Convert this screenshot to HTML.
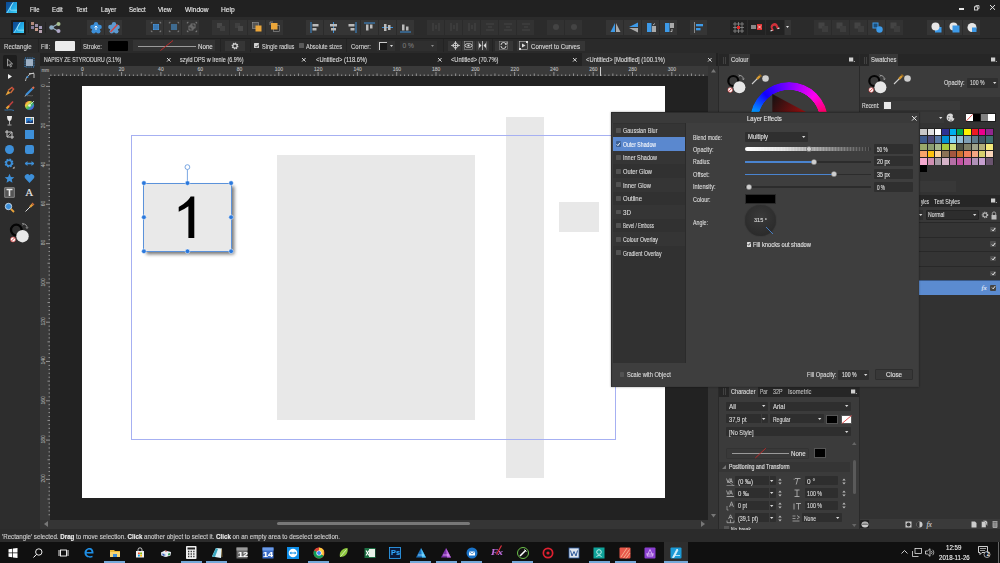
<!DOCTYPE html><html><head><meta charset="utf-8"><title>Affinity Designer</title><style>
*{margin:0;padding:0;box-sizing:border-box}
html,body{width:1000px;height:563px;overflow:hidden;background:#222;font-family:"Liberation Sans",sans-serif}
.a{position:absolute}
.t{position:absolute;white-space:nowrap;line-height:1;-webkit-text-stroke:0.12px currentColor}
svg{position:absolute;overflow:visible}
</style></head><body>
<div class="a" style="left:0px;top:0px;width:1000px;height:17px;background:#212121;"></div>
<svg style="left:6px;top:2.1px;" width="11" height="11" viewBox="0 0 11 11"><defs><linearGradient id="lg6" x1="0" y1="0" x2="1" y2="1"><stop offset="0" stop-color="#0b4f9c"/><stop offset="0.45" stop-color="#1d9fe0"/><stop offset="1" stop-color="#3fd0f6"/></linearGradient></defs><rect width="11" height="11" fill="url(#lg6)"/><path d="M0 0H6.8L0 11Z" fill="#0d4a92" opacity="0.75"/><path d="M1 11L7.2 0.6" stroke="#b8ecfc" stroke-width="0.6"/><path d="M7.2 0.6C5 3.5 3.6 6.3 4.6 8.2H11" stroke="#b8ecfc" stroke-width="0.6" fill="none"/></svg>
<div id="t1" class="t" style="left:29.5px;top:5.80px;font-size:7.6px;color:#ececec;transform:scaleX(0.7755);transform-origin:0 50%;">File</div>
<div id="t2" class="t" style="left:52.3px;top:5.80px;font-size:7.6px;color:#ececec;transform:scaleX(0.8172);transform-origin:0 50%;">Edit</div>
<div id="t3" class="t" style="left:76.3px;top:5.80px;font-size:7.6px;color:#ececec;transform:scaleX(0.8108);transform-origin:0 50%;">Text</div>
<div id="t4" class="t" style="left:100.8px;top:5.80px;font-size:7.6px;color:#ececec;transform:scaleX(0.8000);transform-origin:0 50%;">Layer</div>
<div id="t5" class="t" style="left:128.9px;top:5.80px;font-size:7.6px;color:#ececec;transform:scaleX(0.7959);transform-origin:0 50%;">Select</div>
<div id="t6" class="t" style="left:158.4px;top:5.80px;font-size:7.6px;color:#ececec;transform:scaleX(0.8329);transform-origin:0 50%;">View</div>
<div id="t7" class="t" style="left:184.8px;top:5.80px;font-size:7.6px;color:#ececec;transform:scaleX(0.8699);transform-origin:0 50%;">Window</div>
<div id="t8" class="t" style="left:221px;top:5.80px;font-size:7.6px;color:#ececec;transform:scaleX(0.8768);transform-origin:0 50%;">Help</div>
<div class="a" style="left:959.2px;top:8.4px;width:5px;height:1.4px;background:#e6e6e6;"></div>
<svg style="left:974px;top:5px;" width="5.5" height="5.5" viewBox="0 0 5.5 5.5"><rect x="0.5" y="1.8" width="3.2" height="3.2" fill="none" stroke="#ddd" stroke-width="0.9"/><path d="M1.8 1.8V0.5H5V3.7H3.7" fill="none" stroke="#ddd" stroke-width="0.8"/></svg>
<svg style="left:990px;top:5px;" width="5" height="4.8" viewBox="0 0 5 4.8"><path d="M0 0L5 4.8M5 0L0 4.8" stroke="#e6e6e6" stroke-width="1"/></svg>
<div class="a" style="left:0px;top:17px;width:1000px;height:21px;background:#2b2b2b;"></div>
<div class="a" style="left:0px;top:37.5px;width:1000px;height:1px;background:#1f1f1f;"></div>
<div class="a" style="left:10.7px;top:20.3px;width:15px;height:15px;background:#1b1b1b;border-radius:1px"></div>
<svg style="left:12.8px;top:22px;" width="11" height="11" viewBox="0 0 11 11"><defs><linearGradient id="lg12.8" x1="0" y1="0" x2="1" y2="1"><stop offset="0" stop-color="#0b4f9c"/><stop offset="0.45" stop-color="#1d9fe0"/><stop offset="1" stop-color="#3fd0f6"/></linearGradient></defs><rect width="11" height="11" fill="url(#lg12.8)"/><path d="M0 0H6.8L0 11Z" fill="#0d4a92" opacity="0.75"/><path d="M1 11L7.2 0.6" stroke="#b8ecfc" stroke-width="0.6"/><path d="M7.2 0.6C5 3.5 3.6 6.3 4.6 8.2H11" stroke="#b8ecfc" stroke-width="0.6" fill="none"/></svg>
<div class="a" style="left:27.5px;top:22px;width:0.6px;height:11px;background:#222;"></div>
<div class="a" style="left:45.3px;top:22px;width:0.6px;height:11px;background:#222;"></div>
<svg style="left:31px;top:22px;" width="12" height="11" viewBox="0 0 12 11"><rect x="0" y="0" width="3" height="3" fill="#b48a7a"/><rect x="4" y="2" width="3" height="3" fill="#9a8fa8"/><rect x="0" y="4" width="3" height="3" fill="#8a7f9c"/><rect x="4" y="6" width="3" height="3" fill="#c79a8a"/><rect x="8" y="4" width="3" height="3" fill="#a39ab8"/><rect x="8" y="8" width="3" height="3" fill="#b6a0b0"/></svg>
<svg style="left:49px;top:22px;" width="12" height="11" viewBox="0 0 12 11"><path d="M2.5 5.5L9 2M2.5 5.5L9 9" stroke="#9ab0c0" stroke-width="1.2"/><circle cx="2.5" cy="5.5" r="2.3" fill="#8fb0c8"/><circle cx="9.5" cy="2" r="2" fill="#a8c090"/><circle cx="9.5" cy="9" r="2" fill="#b0a8c8"/></svg>
<div class="a" style="left:87.0px;top:20px;width:17.2px;height:14.5px;background:#353535;"></div>
<div class="a" style="left:105.0px;top:20px;width:17.2px;height:14.5px;background:#353535;"></div>
<svg style="left:90px;top:21.5px;" width="12" height="12" viewBox="0 0 12 12"><circle cx="6" cy="6" r="4.2" fill="#3d8fd8"/><circle cx="6" cy="2.2" r="2.2" fill="#3d8fd8"/><circle cx="9.6" cy="4.9" r="2.2" fill="#3d8fd8"/><circle cx="8.3" cy="9.2" r="2.2" fill="#3d8fd8"/><circle cx="3.7" cy="9.2" r="2.2" fill="#3d8fd8"/><circle cx="2.4" cy="4.9" r="2.2" fill="#3d8fd8"/><path d="M6 4V8M4.5 5.5L6 4L7.5 5.5" stroke="#fff" stroke-width="0.9" fill="none"/></svg>
<svg style="left:108px;top:21.5px;" width="12" height="12" viewBox="0 0 12 12"><circle cx="6" cy="6" r="4.2" fill="#5d9ad0"/><circle cx="6" cy="2.2" r="2.2" fill="#5d9ad0"/><circle cx="9.6" cy="4.9" r="2.2" fill="#5d9ad0"/><circle cx="8.3" cy="9.2" r="2.2" fill="#5d9ad0"/><circle cx="3.7" cy="9.2" r="2.2" fill="#5d9ad0"/><circle cx="2.4" cy="4.9" r="2.2" fill="#5d9ad0"/><path d="M2.5 10L9.5 2.5" stroke="#e0403a" stroke-width="1.2"/></svg>
<div class="a" style="left:146.0px;top:20px;width:17.2px;height:14.5px;background:#353535;"></div>
<div class="a" style="left:164.0px;top:20px;width:17.2px;height:14.5px;background:#353535;"></div>
<div class="a" style="left:182.0px;top:20px;width:17.2px;height:14.5px;background:#353535;"></div>
<svg style="left:150.5px;top:22.2px;" width="10" height="10" viewBox="0 0 10 10"><rect x="2" y="2" width="6" height="6" fill="#4a94d8"/><path d="M4 2V8M6 2V8M2 4H8M2 6H8" stroke="#24527e" stroke-width="0.5"/><path d="M0.3 1.5V0.3H1.5M8.5 0.3H9.7V1.5M9.7 8.5V9.7H8.5M1.5 9.7H0.3V8.5" stroke="#aaa" stroke-width="0.6" fill="none"/></svg>
<svg style="left:168.5px;top:22.2px;" width="10" height="10" viewBox="0 0 10 10"><rect x="2" y="2" width="6" height="6" fill="#3f6b90"/><path d="M0.3 1.5V0.3H1.5M8.5 0.3H9.7V1.5M9.7 8.5V9.7H8.5M1.5 9.7H0.3V8.5" stroke="#aaa" stroke-width="0.6" fill="none"/></svg>
<svg style="left:186.5px;top:22.2px;" width="10" height="10" viewBox="0 0 10 10"><rect x="2" y="4" width="4" height="4" fill="none" stroke="#999" stroke-width="0.6"/><rect x="4" y="2" width="4" height="4" fill="none" stroke="#999" stroke-width="0.6"/><path d="M0.3 1.5V0.3H1.5M8.5 0.3H9.7V1.5M9.7 8.5V9.7H8.5M1.5 9.7H0.3V8.5" stroke="#aaa" stroke-width="0.6" fill="none"/></svg>
<div class="a" style="left:211.5px;top:20px;width:17.325px;height:14.5px;background:#333333;"></div>
<div class="a" style="left:229.625px;top:20px;width:17.325px;height:14.5px;background:#333333;"></div>
<div class="a" style="left:247.75px;top:20px;width:17.325px;height:14.5px;background:#333333;"></div>
<div class="a" style="left:265.875px;top:20px;width:17.325px;height:14.5px;background:#333333;"></div>
<svg style="left:216px;top:22px;" width="10" height="10" viewBox="0 0 10 10"><rect x="1" y="1" width="5" height="5" fill="#484848"/><rect x="4" y="4" width="5" height="5" fill="#404040"/></svg>
<svg style="left:234px;top:22px;" width="10" height="10" viewBox="0 0 10 10"><rect x="1" y="1" width="5" height="5" fill="#404040"/><rect x="4" y="4" width="5" height="5" fill="#484848"/></svg>
<svg style="left:252px;top:22px;" width="10" height="10" viewBox="0 0 10 10"><rect x="0.5" y="0.5" width="6" height="6" fill="#555" stroke="#999" stroke-width="0.6"/><rect x="3.5" y="3.5" width="6" height="6" fill="#eba63a"/></svg>
<svg style="left:270px;top:22px;" width="10" height="10" viewBox="0 0 10 10"><rect x="3.5" y="3.5" width="6" height="6" fill="none" stroke="#999" stroke-width="0.6"/><rect x="1" y="1" width="6.5" height="6.5" fill="#eba63a"/><path d="M0 0H3M0 0V3" stroke="#aaa" stroke-width="0.6"/></svg>
<div class="a" style="left:306.0px;top:20px;width:17.366666666666667px;height:14.5px;background:#353535;"></div>
<div class="a" style="left:324.1666666666667px;top:20px;width:17.366666666666667px;height:14.5px;background:#353535;"></div>
<div class="a" style="left:342.3333333333333px;top:20px;width:17.366666666666667px;height:14.5px;background:#353535;"></div>
<div class="a" style="left:360.5px;top:20px;width:17.366666666666667px;height:14.5px;background:#353535;"></div>
<div class="a" style="left:378.6666666666667px;top:20px;width:17.366666666666667px;height:14.5px;background:#353535;"></div>
<div class="a" style="left:396.83333333333337px;top:20px;width:17.366666666666667px;height:14.5px;background:#353535;"></div>
<svg style="left:309.5px;top:21.8px;" width="11" height="11" viewBox="0 0 11 11"><path d="M1 0V11" stroke="#3d8fd8" stroke-width="1"/><rect x="2.5" y="2" width="6" height="2.5" fill="#bbb"/><rect x="2.5" y="6" width="4" height="2.5" fill="#bbb"/></svg>
<svg style="left:327.67px;top:21.8px;" width="11" height="11" viewBox="0 0 11 11"><path d="M5.5 0V11" stroke="#3d8fd8" stroke-width="1"/><rect x="2" y="2" width="7" height="2.5" fill="#bbb"/><rect x="3" y="6" width="5" height="2.5" fill="#bbb"/></svg>
<svg style="left:345.84000000000003px;top:21.8px;" width="11" height="11" viewBox="0 0 11 11"><path d="M10 0V11" stroke="#3d8fd8" stroke-width="1"/><rect x="2.5" y="2" width="6" height="2.5" fill="#bbb"/><rect x="4.5" y="6" width="4" height="2.5" fill="#bbb"/></svg>
<svg style="left:364.01px;top:21.8px;" width="11" height="11" viewBox="0 0 11 11"><path d="M0 1H11" stroke="#3d8fd8" stroke-width="1"/><rect x="2" y="2.5" width="2.5" height="6" fill="#bbb"/><rect x="6" y="2.5" width="2.5" height="4" fill="#bbb"/></svg>
<svg style="left:382.18px;top:21.8px;" width="11" height="11" viewBox="0 0 11 11"><path d="M0 5.5H11" stroke="#3d8fd8" stroke-width="1"/><rect x="2" y="2" width="2.5" height="7" fill="#bbb"/><rect x="6" y="3" width="2.5" height="5" fill="#bbb"/></svg>
<svg style="left:400.35px;top:21.8px;" width="11" height="11" viewBox="0 0 11 11"><path d="M0 10H11" stroke="#3d8fd8" stroke-width="1"/><rect x="2" y="2.5" width="2.5" height="6" fill="#bbb"/><rect x="6" y="4.5" width="2.5" height="4" fill="#bbb"/></svg>
<div class="a" style="left:427.0px;top:20px;width:17.2px;height:14.5px;background:#323232;"></div>
<div class="a" style="left:445.0px;top:20px;width:17.2px;height:14.5px;background:#323232;"></div>
<div class="a" style="left:463.0px;top:20px;width:17.2px;height:14.5px;background:#323232;"></div>
<div class="a" style="left:481.0px;top:20px;width:17.2px;height:14.5px;background:#323232;"></div>
<div class="a" style="left:499.0px;top:20px;width:17.2px;height:14.5px;background:#323232;"></div>
<div class="a" style="left:517.0px;top:20px;width:17.2px;height:14.5px;background:#323232;"></div>
<svg style="left:431px;top:22px;" width="10" height="10" viewBox="0 0 10 10"><path d="M2 1V9M8 1V9M5 3V7" stroke="#444" stroke-width="1.2"/></svg>
<svg style="left:449px;top:22px;" width="10" height="10" viewBox="0 0 10 10"><path d="M2 1V9M8 1V9M5 3V7" stroke="#444" stroke-width="1.2"/></svg>
<svg style="left:467px;top:22px;" width="10" height="10" viewBox="0 0 10 10"><path d="M2 1V9M8 1V9M5 3V7" stroke="#444" stroke-width="1.2"/></svg>
<svg style="left:485px;top:22px;" width="10" height="10" viewBox="0 0 10 10"><path d="M1 2H9M1 8H9M3 5H7" stroke="#444" stroke-width="1.2"/></svg>
<svg style="left:503px;top:22px;" width="10" height="10" viewBox="0 0 10 10"><path d="M1 2H9M1 8H9M3 5H7" stroke="#444" stroke-width="1.2"/></svg>
<svg style="left:521px;top:22px;" width="10" height="10" viewBox="0 0 10 10"><path d="M1 2H9M1 8H9M3 5H7" stroke="#444" stroke-width="1.2"/></svg>
<div class="a" style="left:547.0px;top:20px;width:17.2px;height:14.5px;background:#323232;"></div>
<div class="a" style="left:565.0px;top:20px;width:17.2px;height:14.5px;background:#323232;"></div>
<svg style="left:551px;top:22px;" width="10" height="10" viewBox="0 0 10 10"><circle cx="5" cy="5" r="3" fill="#444"/></svg>
<svg style="left:569px;top:22px;" width="10" height="10" viewBox="0 0 10 10"><circle cx="5" cy="5" r="3" fill="#444"/></svg>
<div class="a" style="left:606.0px;top:20px;width:17.2px;height:14.5px;background:#353535;"></div>
<div class="a" style="left:624.0px;top:20px;width:17.2px;height:14.5px;background:#353535;"></div>
<div class="a" style="left:642.0px;top:20px;width:17.2px;height:14.5px;background:#353535;"></div>
<div class="a" style="left:660.0px;top:20px;width:17.2px;height:14.5px;background:#353535;"></div>
<svg style="left:609.5px;top:22px;" width="11" height="11" viewBox="0 0 11 11"><path d="M5 1L5 10L0.5 10Z" fill="#3d9ae8"/><path d="M6 1L6 10L10.5 10Z" fill="#aaa"/></svg>
<svg style="left:627.5px;top:22px;" width="11" height="11" viewBox="0 0 11 11"><path d="M10 0.5L10 5L1 5Z" fill="#3d9ae8"/><path d="M10 6L10 10.5L1 6Z" fill="#aaa"/></svg>
<svg style="left:645.5px;top:22px;" width="11" height="11" viewBox="0 0 11 11"><rect x="1" y="1" width="4.5" height="9" fill="#3d9ae8"/><rect x="6" y="4" width="4" height="6" fill="#aaa"/><path d="M7 3L9 1.5" stroke="#ccc" stroke-width="0.8"/></svg>
<svg style="left:663.5px;top:22px;" width="11" height="11" viewBox="0 0 11 11"><rect x="1" y="1" width="4.5" height="9" fill="#3d9ae8"/><rect x="6" y="1" width="4" height="5" fill="#aaa"/><path d="M8 7V9.5H6.5" stroke="#ccc" stroke-width="0.8" fill="none"/></svg>
<div class="a" style="left:690.0px;top:20px;width:16.7px;height:14.5px;background:#353535;"></div>
<svg style="left:693px;top:22px;" width="11" height="11" viewBox="0 0 11 11"><path d="M1.5 0V11" stroke="#888" stroke-width="1"/><rect x="3" y="2" width="7" height="2.3" fill="#3d9ae8"/><rect x="3" y="6" width="4.5" height="2.3" fill="#3d9ae8"/></svg>
<div class="a" style="left:730px;top:20px;width:17px;height:14.5px;background:#222222;"></div>
<div class="a" style="left:748px;top:20px;width:17px;height:14.5px;background:#222222;"></div>
<div class="a" style="left:766px;top:20px;width:18px;height:14.5px;background:#222222;"></div>
<div class="a" style="left:784.5px;top:20px;width:6px;height:14.5px;background:#353535;"></div>
<svg style="left:733px;top:22px;" width="11" height="11" viewBox="0 0 11 11"><path d="M2 0V11M5.5 0V11M9 0V11M0 2H11M0 5.5H11M0 9H11" stroke="#999" stroke-width="0.7"/><rect x="4" y="4" width="3" height="3" fill="#e02828"/></svg>
<svg style="left:751px;top:23px;" width="11" height="8" viewBox="0 0 11 8"><rect x="0" y="2" width="5" height="4" fill="#888"/><rect x="6" y="1" width="5" height="6" fill="#e03030"/><path d="M7 2.5L10 5.5M10 2.5L7 5.5" stroke="#fff" stroke-width="0.7"/></svg>
<svg style="left:769px;top:22px;" width="11" height="11" viewBox="0 0 11 11"><path d="M3 9 L1.5 5 A4 4 0 0 1 8 2 L10 6 L8 7 L6.5 4 A2 2 0 0 0 3.5 5.5 L5 8.5Z" fill="#d0303a"/><path d="M1.5 9L3.5 8.2M8.5 6.8L10.5 6" stroke="#ddd" stroke-width="1.2"/></svg>
<svg style="left:786px;top:26px;" width="3" height="2" viewBox="0 0 3 2"><path d="M0 0H3L1.5 2Z" fill="#ddd"/></svg>
<div class="a" style="left:814.0px;top:20px;width:17.2px;height:14.5px;background:#323232;"></div>
<div class="a" style="left:832.0px;top:20px;width:17.2px;height:14.5px;background:#323232;"></div>
<div class="a" style="left:850.0px;top:20px;width:17.2px;height:14.5px;background:#323232;"></div>
<div class="a" style="left:868.0px;top:20px;width:17.2px;height:14.5px;background:#323232;"></div>
<div class="a" style="left:886.0px;top:20px;width:17.2px;height:14.5px;background:#323232;"></div>
<div class="a" style="left:868px;top:20px;width:17.2px;height:14.5px;background:#353535;"></div>
<svg style="left:817.5px;top:22px;" width="11" height="11" viewBox="0 0 11 11"><rect x="0.5" y="0.5" width="6" height="6" fill="#444"/><rect x="4" y="4" width="6" height="6" fill="#3d3d3d"/></svg>
<svg style="left:835.5px;top:22px;" width="11" height="11" viewBox="0 0 11 11"><rect x="0.5" y="0.5" width="6" height="6" fill="#444"/><rect x="4" y="4" width="6" height="6" fill="#3d3d3d"/></svg>
<svg style="left:853.5px;top:22px;" width="11" height="11" viewBox="0 0 11 11"><rect x="0.5" y="0.5" width="6" height="6" fill="#444"/><rect x="4" y="4" width="6" height="6" fill="#3d3d3d"/></svg>
<svg style="left:871.5px;top:22px;" width="11" height="11" viewBox="0 0 11 11"><rect x="0.5" y="0.5" width="6" height="6" fill="#3d9ae8"/><rect x="1.5" y="1.5" width="4" height="4" fill="#1c4e7a"/><circle cx="7.5" cy="7.5" r="3.2" fill="#3d9ae8"/></svg>
<svg style="left:889.5px;top:22px;" width="11" height="11" viewBox="0 0 11 11"><rect x="0.5" y="0.5" width="6" height="6" fill="#444"/><rect x="4" y="4" width="6" height="6" fill="#3d3d3d"/></svg>
<div class="a" style="left:927.0px;top:20px;width:17.2px;height:14.5px;background:#353535;"></div>
<div class="a" style="left:945.0px;top:20px;width:17.2px;height:14.5px;background:#353535;"></div>
<div class="a" style="left:963.0px;top:20px;width:17.2px;height:14.5px;background:#353535;"></div>
<svg style="left:930.5px;top:22px;" width="11" height="11" viewBox="0 0 11 11"><path d="M4 5H10.5V10.5H4Z" fill="#3d9ae8"/><circle cx="4.5" cy="4.5" r="4" fill="#e8e8e8"/></svg>
<svg style="left:948.5px;top:22px;" width="11" height="11" viewBox="0 0 11 11"><circle cx="4.5" cy="4.5" r="4" fill="#e8e8e8"/><path d="M3.5 3.5H10.5V10.5H3.5Z" fill="#3d9ae8"/></svg>
<svg style="left:966.5px;top:22px;" width="11" height="11" viewBox="0 0 11 11"><circle cx="5" cy="5.5" r="4.5" fill="#e8e8e8"/><path d="M5 5.5H9.5V10H5Z" fill="#3d9ae8"/></svg>
<div class="a" style="left:0px;top:38px;width:1000px;height:15px;background:#2a2a2a;"></div>
<div class="a" style="left:0px;top:38px;width:1000px;height:1px;background:#1f1f1f;"></div>
<div class="a" style="left:0px;top:52.5px;width:1000px;height:0.5px;background:#222;"></div>
<div id="t9" class="t" style="left:4.4px;top:43.10px;font-size:7px;color:#d4d4d4;transform:scaleX(0.8753);transform-origin:0 50%;">Rectangle</div>
<div class="a" style="left:37.5px;top:39px;width:1px;height:13px;background:#232323;"></div>
<div id="t10" class="t" style="left:41px;top:43.10px;font-size:7px;color:#d4d4d4;transform:scaleX(0.8264);transform-origin:0 50%;">Fill:</div>
<div class="a" style="left:55px;top:41px;width:20px;height:9.5px;background:#ececec;border-radius:1px"></div>
<div class="a" style="left:80px;top:39px;width:1px;height:13px;background:#232323;"></div>
<div id="t11" class="t" style="left:83px;top:43.10px;font-size:7px;color:#d4d4d4;transform:scaleX(0.8563);transform-origin:0 50%;">Stroke:</div>
<div class="a" style="left:108px;top:41px;width:20px;height:9.5px;background:#000000;border-radius:1px"></div>
<div class="a" style="left:133px;top:40px;width:82px;height:11px;background:#333333;"></div>
<div class="a" style="left:138px;top:45.5px;width:58px;height:0.8px;background:#9a9a9a;"></div>
<svg style="left:160px;top:39.5px;" width="14" height="11" viewBox="0 0 14 11"><path d="M0.5 10.5L13 0.5" stroke="#c82a2a" stroke-width="0.9"/></svg>
<div id="t12" class="t" style="left:197.6px;top:43.10px;font-size:7px;color:#dcdcdc;transform:scaleX(0.8844);transform-origin:0 50%;">None</div>
<div class="a" style="left:220px;top:39px;width:1px;height:13px;background:#232323;"></div>
<div class="a" style="left:225px;top:40.6px;width:20px;height:10px;background:#363636;"></div>
<svg style="left:231px;top:41.5px;" width="8" height="8" viewBox="0 0 8 8"><circle cx="4" cy="4" r="2.6" fill="none" stroke="#cfcfcf" stroke-width="1.6" stroke-dasharray="1.1 0.9"/><circle cx="4" cy="4" r="2.2" fill="none" stroke="#cfcfcf" stroke-width="1.2"/></svg>
<div class="a" style="left:250px;top:39px;width:1px;height:13px;background:#232323;"></div>
<div class="a" style="left:254px;top:43px;width:5px;height:5px;background:#d0d0d0;border-radius:0.5px"></div>
<svg style="left:254.5px;top:43.5px;" width="4" height="4" viewBox="0 0 4 4"><path d="M0.5 2L1.7 3.2L3.6 0.6" stroke="#222" stroke-width="0.8" fill="none"/></svg>
<div id="t13" class="t" style="left:261.6px;top:43.10px;font-size:7px;color:#d4d4d4;transform:scaleX(0.8006);transform-origin:0 50%;">Single radius</div>
<div class="a" style="left:298.6px;top:43px;width:5px;height:5px;background:#5a5a5a;border-radius:0.5px"></div>
<div id="t14" class="t" style="left:306px;top:43.10px;font-size:7px;color:#d4d4d4;transform:scaleX(0.7975);transform-origin:0 50%;">Absolute sizes</div>
<div class="a" style="left:346px;top:39px;width:1px;height:13px;background:#232323;"></div>
<div id="t15" class="t" style="left:351px;top:43.10px;font-size:7px;color:#d4d4d4;transform:scaleX(0.8568);transform-origin:0 50%;">Corner:</div>
<div class="a" style="left:377px;top:41px;width:18px;height:9.5px;background:#313131;"></div>
<div class="a" style="left:379px;top:42px;width:7.5px;height:7.5px;background:#1a1a1a;border-left:0.8px solid #ccc;border-top:0.8px solid #ccc"></div>
<svg style="left:389.5px;top:45px;" width="3" height="2" viewBox="0 0 3 2"><path d="M0 0H3L1.5 2Z" fill="#ddd"/></svg>
<div class="a" style="left:400px;top:41px;width:37px;height:9.5px;background:#2f2f2f;"></div>
<div id="t16" class="t" style="left:402.5px;top:43.30px;font-size:6.6px;color:#777;">0 %</div>
<svg style="left:431px;top:45px;" width="3" height="2" viewBox="0 0 3 2"><path d="M0 0H3L1.5 2Z" fill="#888"/></svg>
<div class="a" style="left:443px;top:39px;width:1px;height:13px;background:#232323;"></div>
<div class="a" style="left:448.0px;top:40.6px;width:13px;height:10px;background:#363636;"></div>
<div class="a" style="left:461.8px;top:40.6px;width:13px;height:10px;background:#363636;"></div>
<div class="a" style="left:475.6px;top:40.6px;width:13px;height:10px;background:#363636;"></div>
<svg style="left:450.5px;top:41px;" width="9" height="9" viewBox="0 0 9 9"><path d="M4.5 0.5V8.5M0.5 4.5H8.5" stroke="#ddd" stroke-width="0.8"/><circle cx="4.5" cy="4.5" r="2.3" fill="none" stroke="#ddd" stroke-width="0.8"/><path d="M3.5 1.5L4.5 0.5L5.5 1.5M3.5 7.5L4.5 8.5L5.5 7.5M1.5 3.5L0.5 4.5L1.5 5.5M7.5 3.5L8.5 4.5L7.5 5.5" stroke="#ddd" stroke-width="0.6" fill="none"/></svg>
<svg style="left:464.3px;top:41px;" width="9" height="9" viewBox="0 0 9 9"><rect x="0.5" y="0.5" width="8" height="8" fill="none" stroke="#aaa" stroke-width="0.5"/><ellipse cx="4.5" cy="4.5" rx="3.5" ry="2" fill="none" stroke="#ddd" stroke-width="0.8"/><circle cx="4.5" cy="4.5" r="1.1" fill="#ddd"/></svg>
<svg style="left:478px;top:41px;" width="9" height="9" viewBox="0 0 9 9"><path d="M4.5 0V9" stroke="#ddd" stroke-width="0.7"/><path d="M1 2L3.5 4.5L1 7Z M8 2L5.5 4.5L8 7Z" fill="#ddd"/><path d="M0.5 0.5V8.5M8.5 0.5V8.5" stroke="#999" stroke-width="0.5"/></svg>
<div class="a" style="left:492px;top:39px;width:1px;height:13px;background:#232323;"></div>
<div class="a" style="left:494.6px;top:40.6px;width:18.5px;height:10px;background:#363636;"></div>
<svg style="left:499px;top:41px;" width="9" height="9" viewBox="0 0 9 9"><rect x="0.5" y="0.5" width="8" height="8" fill="none" stroke="#999" stroke-width="0.5"/><path d="M2 4A2.5 2.5 0 0 1 7 4M7 5A2.5 2.5 0 0 1 2 5" stroke="#ddd" stroke-width="0.9" fill="none"/><path d="M6 3H8V1" stroke="#ddd" stroke-width="0.7" fill="none"/></svg>
<div class="a" style="left:516.6px;top:40.6px;width:68.5px;height:10px;background:#363636;"></div>
<svg style="left:519px;top:41px;" width="9" height="9" viewBox="0 0 9 9"><rect x="0.5" y="0.5" width="8" height="8" fill="none" stroke="#bbb" stroke-width="0.6"/><path d="M3 2.5L6.5 4.5L3 6.5Z" fill="#ddd"/><rect x="7" y="0" width="2" height="2" fill="#ddd"/><rect x="0" y="7" width="2" height="2" fill="#ddd"/></svg>
<div id="t17" class="t" style="left:531px;top:43.10px;font-size:7px;color:#dcdcdc;transform:scaleX(0.8685);transform-origin:0 50%;">Convert to Curves</div>
<div class="a" style="left:0px;top:53px;width:40px;height:476px;background:#2d2d2d;"></div>
<div class="a" style="left:3px;top:55px;width:14px;height:13.5px;background:#1d1d1d;border-radius:1.5px"></div>
<svg style="left:4.0px;top:56.5px;" width="11" height="11" viewBox="0 0 11 11"><path d="M3.5 2L3.5 9L5.2 7.4L6.5 10L7.6 9.4L6.3 6.9H8.6Z" fill="#2a2a2a" stroke="#c8c8c8" stroke-width="0.7"/></svg>
<svg style="left:24.0px;top:56.5px;" width="11" height="11" viewBox="0 0 11 11"><rect x="2" y="2" width="7" height="7" fill="#8fa6c0"/><path d="M2 4H9M2 6H9M2 8H9" stroke="#d0d0d0" stroke-width="0.5"/><rect x="1" y="1" width="9" height="9" fill="none" stroke="#3d8fd8" stroke-width="1" stroke-dasharray="1 0.8"/></svg>
<svg style="left:4.0px;top:71.0px;" width="11" height="11" viewBox="0 0 11 11"><path d="M4 3L8 5.5L4 8Z" fill="#f0f0f0"/></svg>
<svg style="left:24.0px;top:71.0px;" width="11" height="11" viewBox="0 0 11 11"><path d="M1.5 10C2 6 4.5 3 10 2" stroke="#ccc" stroke-width="0.9" fill="none"/><path d="M5 2.5H10V7" stroke="#ccc" stroke-width="0.9" fill="none"/><circle cx="3.5" cy="6" r="1" fill="#3d8fd8"/></svg>
<svg style="left:4.0px;top:85.5px;" width="11" height="11" viewBox="0 0 11 11"><path d="M1.5 9.5L4 4.5L6.5 7Z" fill="#e8a23a"/><path d="M4 4.5L8.5 1M6.5 7L10 2.5" stroke="#d06a3a" stroke-width="1.3"/><path d="M8 1.5L9.5 3" stroke="#c04040" stroke-width="1.6"/></svg>
<svg style="left:24.0px;top:85.5px;" width="11" height="11" viewBox="0 0 11 11"><path d="M2 9L8.5 2.5" stroke="#3d8fd8" stroke-width="2.2"/><path d="M8.5 2.5L10 1" stroke="#e07050" stroke-width="2"/><path d="M1 10.5L2.2 8.8" stroke="#ddd" stroke-width="0.8"/><path d="M3 10C5 9 7 10.5 9 9.5" stroke="#888" stroke-width="0.5" fill="none"/></svg>
<svg style="left:4.0px;top:100.0px;" width="11" height="11" viewBox="0 0 11 11"><path d="M4 7L9 1.5" stroke="#c04040" stroke-width="1.6"/><path d="M2.5 8.5L5 6" stroke="#e8a23a" stroke-width="2.2"/><path d="M0.5 10C3 10.5 6 9 10 10.5" stroke="#3d8fd8" stroke-width="0.7" fill="none"/></svg>
<svg style="left:24.0px;top:100.0px;" width="11" height="11" viewBox="0 0 11 11"><circle cx="5.5" cy="5.5" r="4.6" fill="url(#cw)"/><circle cx="5.5" cy="5.5" r="1.3" fill="#eee"/><defs><linearGradient id="cw" x1="0" y1="0" x2="1" y2="1"><stop offset="0" stop-color="#f04040"/><stop offset="0.3" stop-color="#f0d040"/><stop offset="0.55" stop-color="#40c060"/><stop offset="0.8" stop-color="#4060f0"/><stop offset="1" stop-color="#c040c0"/></linearGradient></defs><path d="M6 5L10 1" stroke="#ddd" stroke-width="0.8"/></svg>
<svg style="left:4.0px;top:114.5px;" width="11" height="11" viewBox="0 0 11 11"><path d="M3 1H8C8 4 7 6 5.5 6C4 6 3 4 3 1Z" fill="#e8e8e8"/><path d="M5.5 6V9.5M3.5 10H7.5" stroke="#ccc" stroke-width="0.8"/></svg>
<svg style="left:24.0px;top:114.5px;" width="11" height="11" viewBox="0 0 11 11"><rect x="1" y="2" width="9" height="7" fill="#e8e8e8"/><rect x="2" y="3" width="7" height="5" fill="#2f7fd0"/><path d="M2 8L4.5 5.5L6.5 7L9 5V8Z" fill="#1a3a70"/><circle cx="7.5" cy="4" r="0.8" fill="#f0d040"/></svg>
<svg style="left:4.0px;top:129.0px;" width="11" height="11" viewBox="0 0 11 11"><path d="M3 1V8H10M1 3H8V10" stroke="#cfcfcf" stroke-width="1" fill="none"/><path d="M3 8L8 3" stroke="#cfcfcf" stroke-width="0.6"/></svg>
<svg style="left:24.0px;top:129.0px;" width="11" height="11" viewBox="0 0 11 11"><rect x="1" y="1" width="9" height="9" fill="#3d8fd8"/></svg>
<svg style="left:4.0px;top:143.5px;" width="11" height="11" viewBox="0 0 11 11"><circle cx="5.5" cy="5.5" r="4.5" fill="#3d8fd8"/></svg>
<svg style="left:24.0px;top:143.5px;" width="11" height="11" viewBox="0 0 11 11"><rect x="1" y="1" width="9" height="9" rx="2.2" fill="#3d8fd8"/></svg>
<svg style="left:4.0px;top:158.0px;" width="11" height="11" viewBox="0 0 11 11"><circle cx="5" cy="5" r="3.2" fill="none" stroke="#3d8fd8" stroke-width="2.4" stroke-dasharray="1.6 0.9"/><circle cx="5" cy="5" r="2.8" fill="none" stroke="#3d8fd8" stroke-width="1.6"/><path d="M8.5 10.5L10.5 8.5V10.5Z" fill="#ddd"/></svg>
<svg style="left:24.0px;top:158.0px;" width="11" height="11" viewBox="0 0 11 11"><path d="M1 5.5H10" stroke="#3d8fd8" stroke-width="1.6"/><path d="M3.5 3L0.8 5.5L3.5 8ZM7.5 3L10.2 5.5L7.5 8Z" fill="#3d8fd8"/></svg>
<svg style="left:4.0px;top:172.5px;" width="11" height="11" viewBox="0 0 11 11"><path d="M5.5 0.8L6.9 4L10.3 4.2L7.7 6.4L8.5 9.8L5.5 8L2.5 9.8L3.3 6.4L0.7 4.2L4.1 4Z" fill="#3d8fd8"/></svg>
<svg style="left:24.0px;top:172.5px;" width="11" height="11" viewBox="0 0 11 11"><path d="M5.5 10L1.3 5.5A2.5 2.5 0 0 1 5.5 2.3A2.5 2.5 0 0 1 9.7 5.5Z" fill="#3d8fd8"/></svg>
<svg style="left:4.0px;top:187.0px;" width="11" height="11" viewBox="0 0 11 11"><rect x="0.8" y="0.8" width="9.4" height="9.4" fill="#555" stroke="#bbb" stroke-width="0.6"/><path d="M2.5 2.5H8.5M5.5 2.5V9" stroke="#e8e8e8" stroke-width="1.6"/></svg>
<div class="t" style="left:25.3px;top:187px;font-size:11px;color:#e8e8e8;font-family:&quot;Liberation Serif&quot;,serif">A</div>
<svg style="left:24.0px;top:201.5px;" width="11" height="11" viewBox="0 0 11 11"><path d="M1.5 9.5L6.5 4.5" stroke="#ddd" stroke-width="1"/><path d="M6 5L8.5 2.5" stroke="#e8a23a" stroke-width="2.2"/><path d="M8 1L10 3" stroke="#d06a3a" stroke-width="1.2"/></svg>
<svg style="left:4.0px;top:201.5px;" width="11" height="11" viewBox="0 0 11 11"><circle cx="4.5" cy="4.5" r="3.2" fill="#3d8fd8" stroke="#cfe0f0" stroke-width="0.9"/><path d="M7 7L10 10" stroke="#e8a23a" stroke-width="1.8"/></svg>
<svg style="left:8px;top:220px;" width="26" height="26" viewBox="0 0 26 26"><circle cx="8.3" cy="10" r="5.3" fill="none" stroke="#050505" stroke-width="2.3"/><circle cx="14.5" cy="16.2" r="6.2" fill="#e8e8e8"/><circle cx="5" cy="19.5" r="2.5" fill="#fff"/><path d="M3.3 21.2L6.7 17.8" stroke="#d03030" stroke-width="0.9"/><circle cx="5" cy="19.5" r="2.5" fill="none" stroke="#d03030" stroke-width="0.6"/><path d="M15 4A3.5 3.5 0 0 1 19 8" stroke="#bbb" stroke-width="0.7" fill="none"/><path d="M14 3.2L15.5 4L14.2 5.3M18 7.4L19 8.6L20 7.3" stroke="#bbb" stroke-width="0.6" fill="none"/></svg>
<div class="a" style="left:40px;top:53px;width:676px;height:13px;background:#232323;"></div>
<div class="a" style="left:581.5px;top:53px;width:134.5px;height:13px;background:#2e2e2e;"></div>
<div id="t18" class="t" style="left:44.3px;top:57.10px;font-size:6.6px;color:#dadada;transform:scaleX(0.7795);transform-origin:0 50%;">NAPISY ZE STYRODURU (3.1%)</div>
<svg style="left:166.6px;top:57.8px;" width="3.6" height="3.6" viewBox="0 0 3.6 3.6"><path d="M0 0L3.6 3.6M3.6 0L0 3.6" stroke="#e8e8e8" stroke-width="0.9"/></svg>
<div id="t19" class="t" style="left:179.8px;top:57.10px;font-size:6.6px;color:#dadada;transform:scaleX(0.8290);transform-origin:0 50%;">szyld DPS w Irenie (6.9%)</div>
<svg style="left:302.2px;top:57.8px;" width="3.6" height="3.6" viewBox="0 0 3.6 3.6"><path d="M0 0L3.6 3.6M3.6 0L0 3.6" stroke="#e8e8e8" stroke-width="0.9"/></svg>
<div id="t20" class="t" style="left:315.5px;top:57.10px;font-size:6.6px;color:#dadada;transform:scaleX(0.8769);transform-origin:0 50%;">&lt;Untitled&gt; (118.6%)</div>
<svg style="left:437.5px;top:57.8px;" width="3.6" height="3.6" viewBox="0 0 3.6 3.6"><path d="M0 0L3.6 3.6M3.6 0L0 3.6" stroke="#e8e8e8" stroke-width="0.9"/></svg>
<div id="t21" class="t" style="left:451px;top:57.10px;font-size:6.6px;color:#dadada;transform:scaleX(0.8639);transform-origin:0 50%;">&lt;Untitled&gt; (70.7%)</div>
<svg style="left:572.7px;top:57.8px;" width="3.6" height="3.6" viewBox="0 0 3.6 3.6"><path d="M0 0L3.6 3.6M3.6 0L0 3.6" stroke="#e8e8e8" stroke-width="0.9"/></svg>
<div id="t22" class="t" style="left:586px;top:57.10px;font-size:6.6px;color:#dadada;transform:scaleX(0.8869);transform-origin:0 50%;">&lt;Untitled&gt; [Modified] (100.1%)</div>
<svg style="left:707.7px;top:57.8px;" width="3.6" height="3.6" viewBox="0 0 3.6 3.6"><path d="M0 0L3.6 3.6M3.6 0L0 3.6" stroke="#e8e8e8" stroke-width="0.9"/></svg>
<div class="a" style="left:40px;top:66px;width:676px;height:10px;background:#3a3a3a;"></div>
<div class="a" style="left:40px;top:76px;width:10px;height:444px;background:#3a3a3a;"></div>
<svg style="left:0px;top:0px;" width="1000" height="563" viewBox="0 0 1000 563"><g stroke="#d0d0d0" stroke-width="0.6"><path d="M50.86 74.5V76" /><path d="M54.79 74.5V76" /><path d="M58.72 74.5V76" /><path d="M62.65 73.5V76" /><path d="M66.58 74.5V76" /><path d="M70.51 74.5V76" /><path d="M74.44 74.5V76" /><path d="M78.37 74.5V76" /><path d="M82.30 72V76" /><path d="M86.23 74.5V76" /><path d="M90.16 74.5V76" /><path d="M94.09 74.5V76" /><path d="M98.02 74.5V76" /><path d="M101.95 73.5V76" /><path d="M105.88 74.5V76" /><path d="M109.81 74.5V76" /><path d="M113.74 74.5V76" /><path d="M117.67 74.5V76" /><path d="M121.60 72V76" /><path d="M125.53 74.5V76" /><path d="M129.46 74.5V76" /><path d="M133.39 74.5V76" /><path d="M137.32 74.5V76" /><path d="M141.25 73.5V76" /><path d="M145.18 74.5V76" /><path d="M149.11 74.5V76" /><path d="M153.04 74.5V76" /><path d="M156.97 74.5V76" /><path d="M160.90 72V76" /><path d="M164.83 74.5V76" /><path d="M168.76 74.5V76" /><path d="M172.69 74.5V76" /><path d="M176.62 74.5V76" /><path d="M180.55 73.5V76" /><path d="M184.48 74.5V76" /><path d="M188.41 74.5V76" /><path d="M192.34 74.5V76" /><path d="M196.27 74.5V76" /><path d="M200.20 72V76" /><path d="M204.13 74.5V76" /><path d="M208.06 74.5V76" /><path d="M211.99 74.5V76" /><path d="M215.92 74.5V76" /><path d="M219.85 73.5V76" /><path d="M223.78 74.5V76" /><path d="M227.71 74.5V76" /><path d="M231.64 74.5V76" /><path d="M235.57 74.5V76" /><path d="M239.50 72V76" /><path d="M243.43 74.5V76" /><path d="M247.36 74.5V76" /><path d="M251.29 74.5V76" /><path d="M255.22 74.5V76" /><path d="M259.15 73.5V76" /><path d="M263.08 74.5V76" /><path d="M267.01 74.5V76" /><path d="M270.94 74.5V76" /><path d="M274.87 74.5V76" /><path d="M278.80 72V76" /><path d="M282.73 74.5V76" /><path d="M286.66 74.5V76" /><path d="M290.59 74.5V76" /><path d="M294.52 74.5V76" /><path d="M298.45 73.5V76" /><path d="M302.38 74.5V76" /><path d="M306.31 74.5V76" /><path d="M310.24 74.5V76" /><path d="M314.17 74.5V76" /><path d="M318.10 72V76" /><path d="M322.03 74.5V76" /><path d="M325.96 74.5V76" /><path d="M329.89 74.5V76" /><path d="M333.82 74.5V76" /><path d="M337.75 73.5V76" /><path d="M341.68 74.5V76" /><path d="M345.61 74.5V76" /><path d="M349.54 74.5V76" /><path d="M353.47 74.5V76" /><path d="M357.40 72V76" /><path d="M361.33 74.5V76" /><path d="M365.26 74.5V76" /><path d="M369.19 74.5V76" /><path d="M373.12 74.5V76" /><path d="M377.05 73.5V76" /><path d="M380.98 74.5V76" /><path d="M384.91 74.5V76" /><path d="M388.84 74.5V76" /><path d="M392.77 74.5V76" /><path d="M396.70 72V76" /><path d="M400.63 74.5V76" /><path d="M404.56 74.5V76" /><path d="M408.49 74.5V76" /><path d="M412.42 74.5V76" /><path d="M416.35 73.5V76" /><path d="M420.28 74.5V76" /><path d="M424.21 74.5V76" /><path d="M428.14 74.5V76" /><path d="M432.07 74.5V76" /><path d="M436.00 72V76" /><path d="M439.93 74.5V76" /><path d="M443.86 74.5V76" /><path d="M447.79 74.5V76" /><path d="M451.72 74.5V76" /><path d="M455.65 73.5V76" /><path d="M459.58 74.5V76" /><path d="M463.51 74.5V76" /><path d="M467.44 74.5V76" /><path d="M471.37 74.5V76" /><path d="M475.30 72V76" /><path d="M479.23 74.5V76" /><path d="M483.16 74.5V76" /><path d="M487.09 74.5V76" /><path d="M491.02 74.5V76" /><path d="M494.95 73.5V76" /><path d="M498.88 74.5V76" /><path d="M502.81 74.5V76" /><path d="M506.74 74.5V76" /><path d="M510.67 74.5V76" /><path d="M514.60 72V76" /><path d="M518.53 74.5V76" /><path d="M522.46 74.5V76" /><path d="M526.39 74.5V76" /><path d="M530.32 74.5V76" /><path d="M534.25 73.5V76" /><path d="M538.18 74.5V76" /><path d="M542.11 74.5V76" /><path d="M546.04 74.5V76" /><path d="M549.97 74.5V76" /><path d="M553.90 72V76" /><path d="M557.83 74.5V76" /><path d="M561.76 74.5V76" /><path d="M565.69 74.5V76" /><path d="M569.62 74.5V76" /><path d="M573.55 73.5V76" /><path d="M577.48 74.5V76" /><path d="M581.41 74.5V76" /><path d="M585.34 74.5V76" /><path d="M589.27 74.5V76" /><path d="M593.20 72V76" /><path d="M597.13 74.5V76" /><path d="M601.06 74.5V76" /><path d="M604.99 74.5V76" /><path d="M608.92 74.5V76" /><path d="M612.85 73.5V76" /><path d="M616.78 74.5V76" /><path d="M620.71 74.5V76" /><path d="M624.64 74.5V76" /><path d="M628.57 74.5V76" /><path d="M632.50 72V76" /><path d="M636.43 74.5V76" /><path d="M640.36 74.5V76" /><path d="M644.29 74.5V76" /><path d="M648.22 74.5V76" /><path d="M652.15 73.5V76" /><path d="M656.08 74.5V76" /><path d="M660.01 74.5V76" /><path d="M663.94 74.5V76" /><path d="M667.87 74.5V76" /><path d="M671.80 72V76" /><path d="M675.73 74.5V76" /><path d="M679.66 74.5V76" /><path d="M683.59 74.5V76" /><path d="M687.52 74.5V76" /><path d="M691.45 73.5V76" /><path d="M695.38 74.5V76" /><path d="M699.31 74.5V76" /><path d="M703.24 74.5V76" /></g></svg>
<div id="t23" class="t" style="left:78.3px;top:67.00px;font-size:5px;color:#bbbbbb;width:8px;text-align:center">0</div>
<div id="t24" class="t" style="left:117.6px;top:67.00px;font-size:5px;color:#bbbbbb;width:8px;text-align:center">20</div>
<div id="t25" class="t" style="left:156.9px;top:67.00px;font-size:5px;color:#bbbbbb;width:8px;text-align:center">40</div>
<div id="t26" class="t" style="left:196.2px;top:67.00px;font-size:5px;color:#bbbbbb;width:8px;text-align:center">60</div>
<div id="t27" class="t" style="left:235.5px;top:67.00px;font-size:5px;color:#bbbbbb;width:8px;text-align:center">80</div>
<div id="t28" class="t" style="left:274.8px;top:67.00px;font-size:5px;color:#bbbbbb;width:8px;text-align:center">100</div>
<div id="t29" class="t" style="left:314.1px;top:67.00px;font-size:5px;color:#bbbbbb;width:8px;text-align:center">120</div>
<div id="t30" class="t" style="left:353.40000000000003px;top:67.00px;font-size:5px;color:#bbbbbb;width:8px;text-align:center">140</div>
<div id="t31" class="t" style="left:392.70000000000005px;top:67.00px;font-size:5px;color:#bbbbbb;width:8px;text-align:center">160</div>
<div id="t32" class="t" style="left:432.0px;top:67.00px;font-size:5px;color:#bbbbbb;width:8px;text-align:center">180</div>
<div id="t33" class="t" style="left:471.3px;top:67.00px;font-size:5px;color:#bbbbbb;width:8px;text-align:center">200</div>
<div id="t34" class="t" style="left:510.6px;top:67.00px;font-size:5px;color:#bbbbbb;width:8px;text-align:center">220</div>
<div id="t35" class="t" style="left:549.9px;top:67.00px;font-size:5px;color:#bbbbbb;width:8px;text-align:center">240</div>
<div id="t36" class="t" style="left:589.2px;top:67.00px;font-size:5px;color:#bbbbbb;width:8px;text-align:center">260</div>
<div id="t37" class="t" style="left:628.5px;top:67.00px;font-size:5px;color:#bbbbbb;width:8px;text-align:center">280</div>
<div id="t38" class="t" style="left:667.8px;top:67.00px;font-size:5px;color:#bbbbbb;width:8px;text-align:center">300</div>
<div id="t39" class="t" style="left:41.5px;top:69.30px;font-size:4.6px;color:#a8a8a8;">mm</div>
<div class="a" style="left:600px;top:66.5px;width:0.7px;height:9.5px;background:#cfcfcf;"></div>
<svg style="left:0px;top:0px;" width="1000" height="563" viewBox="0 0 1000 563"><g stroke="#d0d0d0" stroke-width="0.6"><path d="M48.5 78.54H50" /><path d="M48.5 82.47H50" /><path d="M46 86.40H50" /><path d="M48.5 90.33H50" /><path d="M48.5 94.26H50" /><path d="M48.5 98.19H50" /><path d="M48.5 102.12H50" /><path d="M47.5 106.05H50" /><path d="M48.5 109.98H50" /><path d="M48.5 113.91H50" /><path d="M48.5 117.84H50" /><path d="M48.5 121.77H50" /><path d="M46 125.70H50" /><path d="M48.5 129.63H50" /><path d="M48.5 133.56H50" /><path d="M48.5 137.49H50" /><path d="M48.5 141.42H50" /><path d="M47.5 145.35H50" /><path d="M48.5 149.28H50" /><path d="M48.5 153.21H50" /><path d="M48.5 157.14H50" /><path d="M48.5 161.07H50" /><path d="M46 165.00H50" /><path d="M48.5 168.93H50" /><path d="M48.5 172.86H50" /><path d="M48.5 176.79H50" /><path d="M48.5 180.72H50" /><path d="M47.5 184.65H50" /><path d="M48.5 188.58H50" /><path d="M48.5 192.51H50" /><path d="M48.5 196.44H50" /><path d="M48.5 200.37H50" /><path d="M46 204.30H50" /><path d="M48.5 208.23H50" /><path d="M48.5 212.16H50" /><path d="M48.5 216.09H50" /><path d="M48.5 220.02H50" /><path d="M47.5 223.95H50" /><path d="M48.5 227.88H50" /><path d="M48.5 231.81H50" /><path d="M48.5 235.74H50" /><path d="M48.5 239.67H50" /><path d="M46 243.60H50" /><path d="M48.5 247.53H50" /><path d="M48.5 251.46H50" /><path d="M48.5 255.39H50" /><path d="M48.5 259.32H50" /><path d="M47.5 263.25H50" /><path d="M48.5 267.18H50" /><path d="M48.5 271.11H50" /><path d="M48.5 275.04H50" /><path d="M48.5 278.97H50" /><path d="M46 282.90H50" /><path d="M48.5 286.83H50" /><path d="M48.5 290.76H50" /><path d="M48.5 294.69H50" /><path d="M48.5 298.62H50" /><path d="M47.5 302.55H50" /><path d="M48.5 306.48H50" /><path d="M48.5 310.41H50" /><path d="M48.5 314.34H50" /><path d="M48.5 318.27H50" /><path d="M46 322.20H50" /><path d="M48.5 326.13H50" /><path d="M48.5 330.06H50" /><path d="M48.5 333.99H50" /><path d="M48.5 337.92H50" /><path d="M47.5 341.85H50" /><path d="M48.5 345.78H50" /><path d="M48.5 349.71H50" /><path d="M48.5 353.64H50" /><path d="M48.5 357.57H50" /><path d="M46 361.50H50" /><path d="M48.5 365.43H50" /><path d="M48.5 369.36H50" /><path d="M48.5 373.29H50" /><path d="M48.5 377.22H50" /><path d="M47.5 381.15H50" /><path d="M48.5 385.08H50" /><path d="M48.5 389.01H50" /><path d="M48.5 392.94H50" /><path d="M48.5 396.87H50" /><path d="M46 400.80H50" /><path d="M48.5 404.73H50" /><path d="M48.5 408.66H50" /><path d="M48.5 412.59H50" /><path d="M48.5 416.52H50" /><path d="M47.5 420.45H50" /><path d="M48.5 424.38H50" /><path d="M48.5 428.31H50" /><path d="M48.5 432.24H50" /><path d="M48.5 436.17H50" /><path d="M46 440.10H50" /><path d="M48.5 444.03H50" /><path d="M48.5 447.96H50" /><path d="M48.5 451.89H50" /><path d="M48.5 455.82H50" /><path d="M47.5 459.75H50" /><path d="M48.5 463.68H50" /><path d="M48.5 467.61H50" /><path d="M48.5 471.54H50" /><path d="M48.5 475.47H50" /><path d="M46 479.40H50" /><path d="M48.5 483.33H50" /><path d="M48.5 487.26H50" /><path d="M48.5 491.19H50" /><path d="M48.5 495.12H50" /><path d="M47.5 499.05H50" /><path d="M48.5 502.98H50" /><path d="M48.5 506.91H50" /><path d="M48.5 510.84H50" /><path d="M48.5 514.77H50" /></g></svg>
<div id="t40" class="t" style="left:39.5px;top:83.20px;font-size:5px;color:#bbbbbb;width:8px;text-align:center;transform:rotate(-90deg);transform-origin:4px 2.5px;left:38.5px;-webkit-text-stroke:0">0</div>
<div id="t41" class="t" style="left:39.5px;top:122.50px;font-size:5px;color:#bbbbbb;width:8px;text-align:center;transform:rotate(-90deg);transform-origin:4px 2.5px;left:38.5px;-webkit-text-stroke:0">20</div>
<div id="t42" class="t" style="left:39.5px;top:161.80px;font-size:5px;color:#bbbbbb;width:8px;text-align:center;transform:rotate(-90deg);transform-origin:4px 2.5px;left:38.5px;-webkit-text-stroke:0">40</div>
<div id="t43" class="t" style="left:39.5px;top:201.10px;font-size:5px;color:#bbbbbb;width:8px;text-align:center;transform:rotate(-90deg);transform-origin:4px 2.5px;left:38.5px;-webkit-text-stroke:0">60</div>
<div id="t44" class="t" style="left:39.5px;top:240.40px;font-size:5px;color:#bbbbbb;width:8px;text-align:center;transform:rotate(-90deg);transform-origin:4px 2.5px;left:38.5px;-webkit-text-stroke:0">80</div>
<div id="t45" class="t" style="left:39.5px;top:279.70px;font-size:5px;color:#bbbbbb;width:8px;text-align:center;transform:rotate(-90deg);transform-origin:4px 2.5px;left:38.5px;-webkit-text-stroke:0">100</div>
<div id="t46" class="t" style="left:39.5px;top:319.00px;font-size:5px;color:#bbbbbb;width:8px;text-align:center;transform:rotate(-90deg);transform-origin:4px 2.5px;left:38.5px;-webkit-text-stroke:0">120</div>
<div id="t47" class="t" style="left:39.5px;top:358.30px;font-size:5px;color:#bbbbbb;width:8px;text-align:center;transform:rotate(-90deg);transform-origin:4px 2.5px;left:38.5px;-webkit-text-stroke:0">140</div>
<div id="t48" class="t" style="left:39.5px;top:397.60px;font-size:5px;color:#bbbbbb;width:8px;text-align:center;transform:rotate(-90deg);transform-origin:4px 2.5px;left:38.5px;-webkit-text-stroke:0">160</div>
<div id="t49" class="t" style="left:39.5px;top:436.90px;font-size:5px;color:#bbbbbb;width:8px;text-align:center;transform:rotate(-90deg);transform-origin:4px 2.5px;left:38.5px;-webkit-text-stroke:0">180</div>
<div id="t50" class="t" style="left:39.5px;top:476.20px;font-size:5px;color:#bbbbbb;width:8px;text-align:center;transform:rotate(-90deg);transform-origin:4px 2.5px;left:38.5px;-webkit-text-stroke:0">200</div>
<div class="a" style="left:50px;top:76px;width:658px;height:444px;background:#222222;"></div>
<div class="a" style="left:708px;top:66px;width:10px;height:454px;background:#353535;"></div>
<div class="a" style="left:40px;top:520px;width:678px;height:9px;background:#353535;"></div>
<svg style="left:710.8px;top:513.5px;" width="5" height="3.5" viewBox="0 0 5 3.5"><path d="M0 0H5L2.5 3.5Z" fill="#777"/></svg>
<svg style="left:710.8px;top:68.5px;" width="5" height="3.5" viewBox="0 0 5 3.5"><path d="M0 3.5H5L2.5 0Z" fill="#777"/></svg>
<svg style="left:43.5px;top:521px;" width="4" height="6" viewBox="0 0 4 6"><path d="M4 0V6L0 3Z" fill="#777"/></svg>
<svg style="left:701px;top:521px;" width="4" height="6" viewBox="0 0 4 6"><path d="M0 0V6L4 3Z" fill="#777"/></svg>
<div class="a" style="left:277px;top:522px;width:193px;height:3.2px;background:#787878;border-radius:2px"></div>
<div class="a" style="left:82px;top:86px;width:583px;height:412px;background:#ffffff;"></div>
<div class="a" style="left:277px;top:155px;width:197.5px;height:265px;background:#e8e8e8;"></div>
<div class="a" style="left:506.2px;top:117px;width:37.7px;height:360.7px;background:#e8e8e8;"></div>
<div class="a" style="left:559.3px;top:201.7px;width:39.7px;height:30.6px;background:#e8e8e8;"></div>
<div class="a" style="left:131.4px;top:135.1px;width:485px;height:305.4px;border:1px solid #a6b0f2"></div>
<div class="a" style="left:143.4px;top:182.6px;width:88.2px;height:69.2px;background:#e9e9e9;box-shadow:2.5px 2.5px 3.5px rgba(0,0,0,0.55)"></div>
<svg style="left:0px;top:0px;" width="1000" height="563" viewBox="0 0 1000 563"><path d="M188.4 237.9H194.3V196.6H190.6C188.8 199.8 185.5 203.3 178.7 207.1V211.8C182.8 209.8 186 208.1 188.4 206.3Z" fill="#000"/></svg>
<div class="a" style="left:143.4px;top:182.6px;width:88.2px;height:69.2px;border:1px solid #5b92da"></div>
<svg style="left:0px;top:0px;" width="1000" height="563" viewBox="0 0 1000 563"><path d="M187.4 169.5V182.6" stroke="#5b92da" stroke-width="0.8"/><circle cx="187.4" cy="167.1" r="2.4" fill="#fff" stroke="#5b92da" stroke-width="0.8"/><circle cx="143.9" cy="183.1" r="2.3" fill="#2a78dc" stroke="#f4f8ff" stroke-width="0.5"/><circle cx="143.9" cy="217.2" r="2.3" fill="#2a78dc" stroke="#f4f8ff" stroke-width="0.5"/><circle cx="143.9" cy="251.3" r="2.3" fill="#2a78dc" stroke="#f4f8ff" stroke-width="0.5"/><circle cx="187.5" cy="183.1" r="2.3" fill="#2a78dc" stroke="#f4f8ff" stroke-width="0.5"/><circle cx="187.5" cy="251.3" r="2.3" fill="#2a78dc" stroke="#f4f8ff" stroke-width="0.5"/><circle cx="231.1" cy="183.1" r="2.3" fill="#2a78dc" stroke="#f4f8ff" stroke-width="0.5"/><circle cx="231.1" cy="217.2" r="2.3" fill="#2a78dc" stroke="#f4f8ff" stroke-width="0.5"/><circle cx="231.1" cy="251.3" r="2.3" fill="#2a78dc" stroke="#f4f8ff" stroke-width="0.5"/></svg>
<div class="a" style="left:0px;top:529px;width:1000px;height:13px;background:#2b2b2b;"></div>
<div id="t51" class="t" style="left:2px;top:532.80px;font-size:7px;color:#cfcfcf;transform:scaleX(0.8819);transform-origin:0 50%;">'Rectangle' selected. <b style="color:#f0f0f0">Drag</b> to move selection. <b style="color:#f0f0f0">Click</b> another object to select it. <b style="color:#f0f0f0">Click</b> on an empty area to deselect selection.</div>
<div class="a" style="left:0px;top:542px;width:1000px;height:21px;background:#101010;"></div>
<div class="a" style="left:664px;top:542px;width:24.3px;height:21px;background:#2e2e2e;"></div>
<svg style="left:6.5px;top:546.5px;" width="12" height="12" viewBox="0 0 12 12"><path d="M1.5 2.2L5.3 1.7V5.6H1.5ZM6 1.6L10.5 1V5.6H6ZM1.5 6.3H5.3V10.3L1.5 9.8ZM6 6.3H10.5V11L6 10.4Z" fill="#fff"/></svg>
<svg style="left:32.0px;top:546.5px;" width="12" height="12" viewBox="0 0 12 12"><circle cx="6.8" cy="5" r="3.2" fill="none" stroke="#fff" stroke-width="0.9"/><path d="M4.5 7.4L1.5 10.5" stroke="#fff" stroke-width="1"/></svg>
<svg style="left:57.5px;top:546.5px;" width="12" height="12" viewBox="0 0 12 12"><rect x="2.5" y="3" width="6" height="6" fill="none" stroke="#fff" stroke-width="0.9"/><path d="M1 3V9M10 3V9" stroke="#fff" stroke-width="0.9"/></svg>
<svg style="left:83.0px;top:546.5px;" width="12" height="12" viewBox="0 0 12 12"><path d="M10.5 6.5H3.5C3.8 8.8 6.5 10 9.5 8.8V10.3C6 11.5 1.5 10 1.5 6C1.5 2.5 4.5 1 6.5 1C9 1 10.8 3 10.5 6.5ZM3.7 5H8.5C8.3 3.3 7.3 2.6 6 2.6C4.8 2.6 3.9 3.5 3.7 5Z" fill="#1f8fe6"/></svg>
<svg style="left:108.5px;top:546.5px;" width="12" height="12" viewBox="0 0 12 12"><path d="M1 3H5L6 4H11V10H1Z" fill="#e8b838"/><rect x="1" y="5" width="10" height="5" fill="#f6d472"/><rect x="4" y="7" width="4" height="3" fill="#3c8cd8"/></svg>
<div class="a" style="left:104px;top:561.3px;width:21px;height:1.7px;background:#74a8d8;"></div>
<svg style="left:134.0px;top:546.5px;" width="12" height="12" viewBox="0 0 12 12"><path d="M2 4H10V10.5H2Z" fill="#eee"/><path d="M4 4V2.8A2 2 0 0 1 8 2.8V4" stroke="#eee" stroke-width="0.8" fill="none"/><rect x="4" y="5.5" width="1.8" height="1.8" fill="#f25022"/><rect x="6.2" y="5.5" width="1.8" height="1.8" fill="#7fba00"/><rect x="4" y="7.7" width="1.8" height="1.8" fill="#00a4ef"/><rect x="6.2" y="7.7" width="1.8" height="1.8" fill="#ffb900"/></svg>
<svg style="left:159.5px;top:546.5px;" width="12" height="12" viewBox="0 0 12 12"><path d="M1 5.5L5 3.5L11 5L10.5 8.5L6 10L1.5 8.5Z" fill="#e8eef4"/><path d="M1 5.5L6 7L6 10L1.5 8.5Z" fill="#c8d0e0"/><path d="M2.5 6.5L4.5 7.2V9L2.5 8.3Z" fill="#3a60c0"/><path d="M8 6.5L10 6V8L8 8.6Z" fill="#40a060"/><circle cx="6" cy="4.3" r="0.7" fill="#e04040"/></svg>
<svg style="left:186px;top:546px;" width="10.5" height="13" viewBox="0 0 10.5 13"><rect x="0" y="0" width="10.5" height="13" rx="0.8" fill="#f0f0f0"/><rect x="1.5" y="1.5" width="7.5" height="2" fill="#222"/><path d="M2 5.5H3.3M4.6 5.5H5.9M7.2 5.5H8.5M2 8H3.3M4.6 8H5.9M7.2 8H8.5M2 10.5H3.3M4.6 10.5H5.9M7.2 10.5H8.5" stroke="#333" stroke-width="1.4"/></svg>
<div class="a" style="left:180.7px;top:561.3px;width:20.900000000000006px;height:1.7px;background:#74a8d8;"></div>
<svg style="left:210.5px;top:546.5px;" width="12" height="12" viewBox="0 0 12 12"><path d="M5 1L11 1.5L10 11L1 9.5Z" fill="#dff2f8"/><path d="M5 1L1 9.5L4 10L7 2Z" fill="#3aa8c0"/><path d="M10.5 2L11 10" stroke="#c09040" stroke-width="0.6"/></svg>
<div class="a" style="left:206px;top:561.3px;width:21.19999999999999px;height:1.7px;background:#74a8d8;"></div>
<svg style="left:236.0px;top:546.5px;" width="12" height="12" viewBox="0 0 12 12"><rect x="0.5" y="0.5" width="11" height="11" fill="#6a6a6a"/><rect x="0.5" y="0.5" width="11" height="3" fill="#9a9a9a"/></svg>
<div id="t52" class="t" style="left:237.5px;top:550.80px;font-size:7.5px;color:#fff;transform:scaleX(1.1985);transform-origin:0 50%;font-weight:bold">12</div>
<svg style="left:261.5px;top:546.5px;" width="12" height="12" viewBox="0 0 12 12"><rect x="0.5" y="0.5" width="11" height="11" fill="#3a6cc8"/><rect x="0.5" y="0.5" width="11" height="3" fill="#6a9ae8"/></svg>
<div id="t53" class="t" style="left:263px;top:550.80px;font-size:7.5px;color:#fff;transform:scaleX(1.1985);transform-origin:0 50%;font-weight:bold">14</div>
<svg style="left:287.0px;top:546.5px;" width="12" height="12" viewBox="0 0 12 12"><rect x="0" y="0" width="12" height="12" fill="#0e8ee9"/><circle cx="6" cy="6" r="4.3" fill="#fff"/><path d="M2.5 6L4.3 4.6V5.4H7.7V4.6L9.5 6L7.7 7.4V6.6H4.3V7.4Z" fill="#0e8ee9"/></svg>
<svg style="left:312.5px;top:546.5px;" width="12" height="12" viewBox="0 0 12 12"><circle cx="6" cy="6" r="5.5" fill="#db4437"/><path d="M6 6L10.76 8.75A5.5 5.5 0 0 1 3.25 10.76Z" fill="#0f9d58"/><path d="M6 6L3.25 10.76A5.5 5.5 0 0 1 1.24 3.25Z" fill="#0f9d58"/><path d="M6 6L1.24 3.25A5.5 5.5 0 0 1 6 0.5Z" fill="#db4437"/><path d="M6 6L6 0.5A5.5 5.5 0 0 1 10.76 3.25L10.76 8.75Z" fill="#ffcd40"/><circle cx="6" cy="6" r="2.6" fill="#fff"/><circle cx="6" cy="6" r="2" fill="#4285f4"/></svg>
<div class="a" style="left:308px;top:561.3px;width:21px;height:1.7px;background:#74a8d8;"></div>
<svg style="left:338.0px;top:546.5px;" width="12" height="12" viewBox="0 0 12 12"><path d="M2 10C1 6 3 1.5 9.5 1C10.5 5 8.5 10 2 10Z" fill="#8cc63e"/><path d="M2.5 9.5L8.5 2.5" stroke="#e8f4d0" stroke-width="0.8"/></svg>
<svg style="left:363.5px;top:546.5px;" width="12" height="12" viewBox="0 0 12 12"><rect x="0.5" y="1" width="11" height="10" fill="#1d7044"/><rect x="5" y="2" width="6" height="8" fill="#e8f0e8"/><path d="M2 3.5L5 8.5M5 3.5L2 8.5" stroke="#fff" stroke-width="1.1"/></svg>
<svg style="left:389.0px;top:546.5px;" width="12" height="12" viewBox="0 0 12 12"><rect x="0.5" y="0.5" width="11" height="11" fill="#0a1a3a" stroke="#31a8ff" stroke-width="0.8"/></svg>
<div id="t54" class="t" style="left:390.5px;top:549.80px;font-size:6.6px;color:#31a8ff;transform:scaleX(1.1141);transform-origin:0 50%;font-weight:bold">Ps</div>
<svg style="left:414.5px;top:546.5px;" width="12" height="12" viewBox="0 0 12 12"><path d="M6 1L11 10.5H1Z" fill="#1b72be"/><path d="M6 1L11 10.5H7Z" fill="#4fc3f7"/><path d="M3 8H9" stroke="#bde6fb" stroke-width="0.7"/></svg>
<div class="a" style="left:410px;top:561.3px;width:21px;height:1.7px;background:#74a8d8;"></div>
<svg style="left:440.0px;top:546.5px;" width="12" height="12" viewBox="0 0 12 12"><path d="M6 1L11 10.5H1Z" fill="#7a2fa8"/><path d="M6 1L11 10.5H7Z" fill="#c06ae0"/><path d="M3 8H9" stroke="#f0c8ff" stroke-width="0.7"/></svg>
<div class="a" style="left:436px;top:561.3px;width:21px;height:1.7px;background:#74a8d8;"></div>
<svg style="left:465.5px;top:546.5px;" width="12" height="12" viewBox="0 0 12 12"><circle cx="6" cy="6" r="5.5" fill="#1a73c8"/><path d="M3 4.5H9V8.5H3Z" fill="#fff"/><path d="M3 4.5L6 6.8L9 4.5" stroke="#1a73c8" stroke-width="0.7" fill="none"/></svg>
<div class="a" style="left:461px;top:561.3px;width:21px;height:1.7px;background:#74a8d8;"></div>
<div id="t55" class="t" style="left:490.5px;top:548.30px;font-size:9px;color:#c070e0;transform:scaleX(1.1412);transform-origin:0 50%;font-weight:bold;font-family:&quot;Liberation Serif&quot;,serif"><i>Fx</i></div>
<svg style="left:496px;top:545px;" width="6" height="10" viewBox="0 0 6 10"><path d="M0.5 9.5L5.5 0.5" stroke="#e03040" stroke-width="1.2"/></svg>
<svg style="left:516.5px;top:546.5px;" width="12" height="12" viewBox="0 0 12 12"><circle cx="6" cy="6" r="5.5" fill="#111" stroke="#6cc04a" stroke-width="1"/><path d="M3 9L8.5 3.5" stroke="#fff" stroke-width="1.6"/><path d="M7.5 2.5L9.5 4.5" stroke="#fff" stroke-width="1"/></svg>
<div class="a" style="left:512px;top:561.3px;width:21px;height:1.7px;background:#74a8d8;"></div>
<svg style="left:542.0px;top:546.5px;" width="12" height="12" viewBox="0 0 12 12"><circle cx="6" cy="6" r="5.5" fill="#e02030"/><circle cx="6" cy="6" r="3.8" fill="#111"/><circle cx="6" cy="6" r="1.6" fill="#e02030"/></svg>
<svg style="left:567.5px;top:546.5px;" width="12" height="12" viewBox="0 0 12 12"><rect x="1" y="1" width="10" height="10" fill="#dde4ee"/><rect x="1" y="1" width="10" height="10" fill="none" stroke="#2b579a" stroke-width="0.8"/><path d="M2.5 3.5L4 9L6 4.5L8 9L9.5 3.5" stroke="#2b579a" stroke-width="1" fill="none"/></svg>
<svg style="left:593.0px;top:546.5px;" width="12" height="12" viewBox="0 0 12 12"><rect x="0.5" y="0.5" width="11" height="11" fill="#0fa39a"/><circle cx="6" cy="5" r="2.3" fill="none" stroke="#e8fffa" stroke-width="0.8"/><path d="M3.5 10C4 8 8 8 8.5 10" stroke="#e8fffa" stroke-width="0.8" fill="none"/></svg>
<div class="a" style="left:589px;top:561.3px;width:21px;height:1.7px;background:#74a8d8;"></div>
<svg style="left:618.5px;top:546.5px;" width="12" height="12" viewBox="0 0 12 12"><rect x="0.5" y="0.5" width="11" height="11" rx="1" fill="#e8584a"/><path d="M2 10L8 1M4.5 11L10.5 2.5M7 11.5L11 6" stroke="#f9c0a0" stroke-width="0.8"/></svg>
<div class="a" style="left:615px;top:561.3px;width:21px;height:1.7px;background:#74a8d8;"></div>
<svg style="left:644.0px;top:546.5px;" width="12" height="12" viewBox="0 0 12 12"><rect x="0.5" y="0.5" width="11" height="11" rx="1" fill="#8a3fd0"/><path d="M3 9L6 2.5L9 9ZM2 7H10" stroke="#f0d8ff" stroke-width="0.7" fill="none"/></svg>
<svg style="left:670.0px;top:546.5px;" width="12" height="12" viewBox="0 0 12 12"><rect x="0.5" y="0.5" width="11" height="11" rx="1" fill="#1b9ad6"/><path d="M2.5 10.5L7 2L8 3L4 10.5ZM4 8.5H10" stroke="#d8f2fd" stroke-width="0.8" fill="#d8f2fd"/></svg>
<div class="a" style="left:664px;top:561.3px;width:24.299999999999955px;height:1.7px;background:#74a8d8;"></div>
<svg style="left:901px;top:549.5px;" width="7" height="4" viewBox="0 0 7 4"><path d="M0.5 3.5L3.5 0.5L6.5 3.5" stroke="#fff" stroke-width="0.8" fill="none"/></svg>
<svg style="left:912px;top:548px;" width="10" height="9" viewBox="0 0 10 9"><rect x="3" y="0.5" width="6.5" height="5" fill="none" stroke="#fff" stroke-width="0.7"/><path d="M0.5 3V8.5M0.5 8.5H6.5" stroke="#fff" stroke-width="0.7"/></svg>
<svg style="left:925px;top:548px;" width="9" height="9" viewBox="0 0 9 9"><path d="M0.5 3H2.5L5 0.7V8.3L2.5 6H0.5Z" fill="none" stroke="#fff" stroke-width="0.7"/><path d="M6.3 3A2 2 0 0 1 6.3 6M7.5 1.8A3.5 3.5 0 0 1 7.5 7.2" stroke="#fff" stroke-width="0.6" fill="none"/></svg>
<div id="t56" class="t" style="left:946px;top:545.40px;font-size:6.6px;color:#f0f0f0;transform:scaleX(0.9325);transform-origin:0 50%;">12:59</div>
<div id="t57" class="t" style="left:938.9px;top:554.60px;font-size:6.6px;color:#f0f0f0;transform:scaleX(0.9233);transform-origin:0 50%;">2018-11-26</div>
<svg style="left:978px;top:546px;" width="13" height="12" viewBox="0 0 13 12"><path d="M0.5 0.5H9.5V6.5H4L2 8.5V6.5H0.5Z" fill="none" stroke="#fff" stroke-width="0.8"/><path d="M2 2.5H8M2 4.5H7" stroke="#fff" stroke-width="0.6"/><circle cx="9" cy="8.5" r="3" fill="#101010" stroke="#fff" stroke-width="0.6"/></svg>
<div id="t58" class="t" style="left:986.7px;top:553.10px;font-size:4.6px;color:#fff;">2</div>
<div class="a" style="left:997.5px;top:542px;width:0.6px;height:21px;background:#666;"></div>
<div class="a" style="left:718px;top:53px;width:282px;height:476px;background:#2a2a2a;"></div>
<div class="a" style="left:719px;top:54px;width:140px;height:12px;background:#262626;"></div>
<svg style="left:723px;top:56.5px;" width="3" height="7" viewBox="0 0 3 7"><path d="M0.5 0V7M2.5 0V7" stroke="#555" stroke-width="0.6"/></svg>
<div class="a" style="left:728.8px;top:54px;width:21.5px;height:12px;background:#383838;"></div>
<div id="t59" class="t" style="left:730.5px;top:56.40px;font-size:7px;color:#dcdcdc;transform:scaleX(0.8485);transform-origin:0 50%;">Colour</div>
<svg style="left:849px;top:57px;" width="6" height="6" viewBox="0 0 6 6"><rect x="0" y="0.5" width="4.2" height="4" fill="#cfcfcf"/><path d="M4.8 4.5H6" stroke="#cfcfcf" stroke-width="0.7"/></svg>
<div class="a" style="left:719px;top:66px;width:140px;height:320px;background:#3b3b3b;"></div>
<svg style="left:725px;top:72.2px;" width="26" height="26" viewBox="0 0 26 26"><circle cx="8.3" cy="9" r="5" fill="none" stroke="#050505" stroke-width="2.2"/><circle cx="14.4" cy="15.2" r="6" fill="#e6e6e6"/><circle cx="5.2" cy="18" r="2.4" fill="#fff"/><path d="M3.6 19.6L6.8 16.4" stroke="#d03030" stroke-width="0.9"/><circle cx="5.2" cy="18" r="2.4" fill="none" stroke="#d03030" stroke-width="0.5"/><path d="M14.5 3.5A3.5 3.5 0 0 1 18.3 7.3" stroke="#bbb" stroke-width="0.7" fill="none"/><path d="M13.6 2.8L14.9 3.6L13.8 4.8M17.4 6.7L18.4 7.9L19.3 6.6" stroke="#bbb" stroke-width="0.6" fill="none"/></svg>
<svg style="left:751px;top:73px;" width="12" height="12" viewBox="0 0 12 12"><path d="M1 11L6.5 5.5" stroke="#cfcfcf" stroke-width="1.1"/><path d="M6 6L9 3" stroke="#d89a30" stroke-width="2.4"/><path d="M8.5 1.5L10.5 3.5" stroke="#a07020" stroke-width="1.3"/></svg>
<svg style="left:762px;top:75px;" width="7" height="7" viewBox="0 0 7 7"><circle cx="3.5" cy="3.5" r="3.3" fill="#cfcfcf"/></svg>
<div class="a" style="left:749.6px;top:81.5px;width:78.6px;height:78.6px;border-radius:50%;background:conic-gradient(from 0deg,#8000ff 0deg,#ff00f0 45deg,#ff0050 80deg,#ff5000 110deg,#ffff00 160deg,#00ff60 220deg,#00b0ff 280deg,#1000ff 318deg,#8000ff 360deg);-webkit-mask:radial-gradient(circle,transparent 30.8px,#000 31.3px);mask:radial-gradient(circle,transparent 30.8px,#000 31.3px)"></div>
<svg style="left:0px;top:0px;" width="1000" height="563" viewBox="0 0 1000 563"><defs><linearGradient id="tri" x1="0" y1="0" x2="1" y2="0.6"><stop offset="0" stop-color="#111"/><stop offset="1" stop-color="#9a1010"/></linearGradient></defs><path d="M772.3 94L772.3 125L806 112Z" fill="url(#tri)"/></svg>
<div class="a" style="left:860px;top:54px;width:140px;height:12px;background:#262626;"></div>
<svg style="left:864px;top:56.5px;" width="3" height="7" viewBox="0 0 3 7"><path d="M0.5 0V7M2.5 0V7" stroke="#555" stroke-width="0.6"/></svg>
<div class="a" style="left:868.5px;top:54px;width:29px;height:12px;background:#383838;"></div>
<div id="t60" class="t" style="left:870.5px;top:56.40px;font-size:7px;color:#dcdcdc;transform:scaleX(0.8399);transform-origin:0 50%;">Swatches</div>
<svg style="left:991px;top:57px;" width="6" height="6" viewBox="0 0 6 6"><rect x="0" y="0.5" width="4.2" height="4" fill="#cfcfcf"/><path d="M4.8 4.5H6" stroke="#cfcfcf" stroke-width="0.7"/></svg>
<div class="a" style="left:860px;top:66px;width:140px;height:31px;background:#3b3b3b;"></div>
<svg style="left:866px;top:72.2px;" width="26" height="26" viewBox="0 0 26 26"><circle cx="8.3" cy="9" r="5" fill="none" stroke="#050505" stroke-width="2.2"/><circle cx="14.4" cy="15.2" r="6" fill="#e6e6e6"/><circle cx="5.2" cy="18" r="2.4" fill="#fff"/><path d="M3.6 19.6L6.8 16.4" stroke="#d03030" stroke-width="0.9"/><circle cx="5.2" cy="18" r="2.4" fill="none" stroke="#d03030" stroke-width="0.5"/><path d="M14.5 3.5A3.5 3.5 0 0 1 18.3 7.3" stroke="#bbb" stroke-width="0.7" fill="none"/><path d="M13.6 2.8L14.9 3.6L13.8 4.8M17.4 6.7L18.4 7.9L19.3 6.6" stroke="#bbb" stroke-width="0.6" fill="none"/></svg>
<svg style="left:893px;top:73px;" width="12" height="12" viewBox="0 0 12 12"><path d="M1 11L6.5 5.5" stroke="#cfcfcf" stroke-width="1.1"/><path d="M6 6L9 3" stroke="#d89a30" stroke-width="2.4"/><path d="M8.5 1.5L10.5 3.5" stroke="#a07020" stroke-width="1.3"/></svg>
<svg style="left:904px;top:75px;" width="7" height="7" viewBox="0 0 7 7"><circle cx="3.5" cy="3.5" r="3.3" fill="#cfcfcf"/></svg>
<div id="t61" class="t" style="left:943.5px;top:80.40px;font-size:6.8px;color:#dcdcdc;transform:scaleX(0.8221);transform-origin:0 50%;">Opacity:</div>
<div class="a" style="left:966.6px;top:78px;width:31px;height:9.8px;background:#2f2f2f;border-radius:1px"></div>
<div id="t62" class="t" style="left:969.5px;top:80.40px;font-size:6.8px;color:#dcdcdc;transform:scaleX(0.7520);transform-origin:0 50%;">100 %</div>
<svg style="left:992.5px;top:82.3px;" width="3.4" height="2" viewBox="0 0 3.4 2"><path d="M0 0H3.4L1.7 2Z" fill="#d8d8d8"/></svg>
<div class="a" style="left:860px;top:97px;width:140px;height:98px;background:#333333;"></div>
<div id="t63" class="t" style="left:861.5px;top:102.60px;font-size:6.8px;color:#dcdcdc;transform:scaleX(0.7467);transform-origin:0 50%;">Recent:</div>
<div class="a" style="left:883px;top:101px;width:77px;height:8.5px;background:#3a3a3a;"></div>
<div class="a" style="left:884px;top:102px;width:6.5px;height:6.5px;background:#e8e8e8;"></div>
<div class="a" style="left:920px;top:112px;width:24px;height:11px;background:#383838;"></div>
<svg style="left:939px;top:116.8px;" width="3.4" height="2" viewBox="0 0 3.4 2"><path d="M0 0H3.4L1.7 2Z" fill="#d8d8d8"/></svg>
<svg style="left:946px;top:113px;" width="9" height="9" viewBox="0 0 9 9"><path d="M4.5 0.5A4 4 0 1 0 8.5 5.5C7 5.5 6 4 7 2.5C6.8 1.2 5.8 0.5 4.5 0.5Z" fill="#d8d8d8"/><circle cx="3" cy="3.5" r="0.7" fill="#666"/><circle cx="2.6" cy="6" r="0.7" fill="#666"/><circle cx="5" cy="7.3" r="0.7" fill="#666"/></svg>
<div class="a" style="left:965.5px;top:113px;width:30.5px;height:8.8px;background:#1c1c1c;"></div>
<div class="a" style="left:966.3px;top:113.7px;width:6.8px;height:7.3px;background:#ffffff;"></div>
<svg style="left:966.3px;top:113.7px;" width="7" height="7.3" viewBox="0 0 7 7.3"><path d="M0.3 7L6.7 0.3" stroke="#e02828" stroke-width="0.8"/></svg>
<div class="a" style="left:973.4px;top:113.7px;width:6.8px;height:7.3px;background:#000000;"></div>
<div class="a" style="left:980.8px;top:113.7px;width:6.8px;height:7.3px;background:#808080;"></div>
<div class="a" style="left:988.3px;top:113.7px;width:6.8px;height:7.3px;background:#ffffff;"></div>
<div class="a" style="left:919.5px;top:128px;width:74px;height:37.3px;background:#222222;"></div>
<div class="a" style="left:920.45px;top:129.04999999999998px;width:6.4px;height:6.4px;background:#c8c8c8;"></div>
<div class="a" style="left:927.75px;top:129.04999999999998px;width:6.4px;height:6.4px;background:#e0e0e0;"></div>
<div class="a" style="left:935.0500000000001px;top:129.04999999999998px;width:6.4px;height:6.4px;background:#ffffff;"></div>
<div class="a" style="left:942.35px;top:129.04999999999998px;width:6.4px;height:6.4px;background:#2e3192;"></div>
<div class="a" style="left:949.6500000000001px;top:129.04999999999998px;width:6.4px;height:6.4px;background:#00aeef;"></div>
<div class="a" style="left:956.95px;top:129.04999999999998px;width:6.4px;height:6.4px;background:#00a651;"></div>
<div class="a" style="left:964.25px;top:129.04999999999998px;width:6.4px;height:6.4px;background:#fff200;"></div>
<div class="a" style="left:971.5500000000001px;top:129.04999999999998px;width:6.4px;height:6.4px;background:#ed1c24;"></div>
<div class="a" style="left:978.85px;top:129.04999999999998px;width:6.4px;height:6.4px;background:#ec008c;"></div>
<div class="a" style="left:986.1500000000001px;top:129.04999999999998px;width:6.4px;height:6.4px;background:#92278f;"></div>
<div class="a" style="left:920.45px;top:136.35px;width:6.4px;height:6.4px;background:#3d5a8c;"></div>
<div class="a" style="left:927.75px;top:136.35px;width:6.4px;height:6.4px;background:#4b4a7a;"></div>
<div class="a" style="left:935.0500000000001px;top:136.35px;width:6.4px;height:6.4px;background:#5a7aa6;"></div>
<div class="a" style="left:942.35px;top:136.35px;width:6.4px;height:6.4px;background:#0091d5;"></div>
<div class="a" style="left:949.6500000000001px;top:136.35px;width:6.4px;height:6.4px;background:#7fd3f7;"></div>
<div class="a" style="left:956.95px;top:136.35px;width:6.4px;height:6.4px;background:#92bcd4;"></div>
<div class="a" style="left:964.25px;top:136.35px;width:6.4px;height:6.4px;background:#7e9fb5;"></div>
<div class="a" style="left:971.5500000000001px;top:136.35px;width:6.4px;height:6.4px;background:#5e7a8a;"></div>
<div class="a" style="left:978.85px;top:136.35px;width:6.4px;height:6.4px;background:#3e5563;"></div>
<div class="a" style="left:986.1500000000001px;top:136.35px;width:6.4px;height:6.4px;background:#3e6e6e;"></div>
<div class="a" style="left:920.45px;top:143.64999999999998px;width:6.4px;height:6.4px;background:#9aaa6b;"></div>
<div class="a" style="left:927.75px;top:143.64999999999998px;width:6.4px;height:6.4px;background:#8a9c70;"></div>
<div class="a" style="left:935.0500000000001px;top:143.64999999999998px;width:6.4px;height:6.4px;background:#a5b88a;"></div>
<div class="a" style="left:942.35px;top:143.64999999999998px;width:6.4px;height:6.4px;background:#a6c93c;"></div>
<div class="a" style="left:949.6500000000001px;top:143.64999999999998px;width:6.4px;height:6.4px;background:#cfdc7f;"></div>
<div class="a" style="left:956.95px;top:143.64999999999998px;width:6.4px;height:6.4px;background:#4f5346;"></div>
<div class="a" style="left:964.25px;top:143.64999999999998px;width:6.4px;height:6.4px;background:#7e8068;"></div>
<div class="a" style="left:971.5500000000001px;top:143.64999999999998px;width:6.4px;height:6.4px;background:#9fa28a;"></div>
<div class="a" style="left:978.85px;top:143.64999999999998px;width:6.4px;height:6.4px;background:#b2af7a;"></div>
<div class="a" style="left:986.1500000000001px;top:143.64999999999998px;width:6.4px;height:6.4px;background:#f5eb7a;"></div>
<div class="a" style="left:920.45px;top:150.95px;width:6.4px;height:6.4px;background:#f7a46b;"></div>
<div class="a" style="left:927.75px;top:150.95px;width:6.4px;height:6.4px;background:#fec10e;"></div>
<div class="a" style="left:935.0500000000001px;top:150.95px;width:6.4px;height:6.4px;background:#fcd29c;"></div>
<div class="a" style="left:942.35px;top:150.95px;width:6.4px;height:6.4px;background:#8b7356;"></div>
<div class="a" style="left:949.6500000000001px;top:150.95px;width:6.4px;height:6.4px;background:#a5573f;"></div>
<div class="a" style="left:956.95px;top:150.95px;width:6.4px;height:6.4px;background:#c8702f;"></div>
<div class="a" style="left:964.25px;top:150.95px;width:6.4px;height:6.4px;background:#ef7f5a;"></div>
<div class="a" style="left:971.5500000000001px;top:150.95px;width:6.4px;height:6.4px;background:#f4a683;"></div>
<div class="a" style="left:978.85px;top:150.95px;width:6.4px;height:6.4px;background:#d7cf6e;"></div>
<div class="a" style="left:986.1500000000001px;top:150.95px;width:6.4px;height:6.4px;background:#f9d4b8;"></div>
<div class="a" style="left:920.45px;top:158.24999999999997px;width:6.4px;height:6.4px;background:#f4a9cf;"></div>
<div class="a" style="left:927.75px;top:158.24999999999997px;width:6.4px;height:6.4px;background:#d08fb2;"></div>
<div class="a" style="left:935.0500000000001px;top:158.24999999999997px;width:6.4px;height:6.4px;background:#a69aa4;"></div>
<div class="a" style="left:942.35px;top:158.24999999999997px;width:6.4px;height:6.4px;background:#d5b3c8;"></div>
<div class="a" style="left:949.6500000000001px;top:158.24999999999997px;width:6.4px;height:6.4px;background:#b46fa5;"></div>
<div class="a" style="left:956.95px;top:158.24999999999997px;width:6.4px;height:6.4px;background:#c352a2;"></div>
<div class="a" style="left:964.25px;top:158.24999999999997px;width:6.4px;height:6.4px;background:#c46bb1;"></div>
<div class="a" style="left:971.5500000000001px;top:158.24999999999997px;width:6.4px;height:6.4px;background:#b091b8;"></div>
<div class="a" style="left:978.85px;top:158.24999999999997px;width:6.4px;height:6.4px;background:#c69fd0;"></div>
<div class="a" style="left:986.1500000000001px;top:158.24999999999997px;width:6.4px;height:6.4px;background:#6b5470;"></div>
<div class="a" style="left:920px;top:165px;width:7.3px;height:7.3px;background:#000;"></div>
<div class="a" style="left:920px;top:181px;width:36px;height:10.5px;background:#383838;"></div>
<div class="a" style="left:860px;top:195px;width:140px;height:11.6px;background:#262626;"></div>
<div id="t64" class="t" style="left:920.5px;top:198.60px;font-size:6.8px;color:#dcdcdc;transform:scaleX(0.6615);transform-origin:0 50%;">yles</div>
<div id="t65" class="t" style="left:934px;top:198.60px;font-size:6.8px;color:#dcdcdc;transform:scaleX(0.7909);transform-origin:0 50%;">Text Styles</div>
<svg style="left:991px;top:198px;" width="6" height="6" viewBox="0 0 6 6"><rect x="0" y="0.5" width="4.2" height="4" fill="#cfcfcf"/><path d="M4.8 4.5H6" stroke="#cfcfcf" stroke-width="0.7"/></svg>
<div class="a" style="left:860px;top:206.6px;width:140px;height:312.4px;background:#323232;"></div>
<div class="a" style="left:860px;top:206.6px;width:140px;height:15.4px;background:#383838;"></div>
<div class="a" style="left:919px;top:209.5px;width:4px;height:10.2px;background:#2f2f2f;"></div>
<svg style="left:919.2px;top:213.6px;" width="3.4" height="2" viewBox="0 0 3.4 2"><path d="M0 0H3.4L1.7 2Z" fill="#d8d8d8"/></svg>
<div class="a" style="left:925.5px;top:209.5px;width:53.5px;height:10.2px;background:#2d2d2d;border:0.5px solid #242424;border-radius:1px"></div>
<div id="t66" class="t" style="left:928.3px;top:212.10px;font-size:6.8px;color:#dcdcdc;transform:scaleX(0.7532);transform-origin:0 50%;">Normal</div>
<svg style="left:973.3px;top:213.6px;" width="3.4" height="2" viewBox="0 0 3.4 2"><path d="M0 0H3.4L1.7 2Z" fill="#d8d8d8"/></svg>
<svg style="left:980.5px;top:211px;" width="8" height="8" viewBox="0 0 8 8"><circle cx="4" cy="4" r="2.5" fill="none" stroke="#bbb" stroke-width="1.5" stroke-dasharray="1 0.8"/><circle cx="4" cy="4" r="2" fill="none" stroke="#bbb" stroke-width="1"/></svg>
<svg style="left:990.5px;top:210.5px;" width="6" height="9" viewBox="0 0 6 9"><path d="M1.3 4V2.6A1.7 1.7 0 0 1 4.7 2.6V4" stroke="#bbb" stroke-width="0.8" fill="none"/><rect x="0.5" y="4" width="5" height="4.5" fill="#bbb"/></svg>
<div class="a" style="left:860px;top:222px;width:140px;height:14.5px;background:#343434;"></div>
<div class="a" style="left:860px;top:222px;width:140px;height:0.6px;background:#282828;"></div>
<div class="a" style="left:990.4px;top:226.8px;width:5.6px;height:5.6px;background:#4e4e4e;border-radius:1px"></div>
<svg style="left:990.7px;top:227.1px;" width="5" height="5" viewBox="0 0 5 5"><path d="M0.9 2.6L2.1 3.9L4.2 1" stroke="#f0f0f0" stroke-width="1" fill="none"/></svg>
<div class="a" style="left:860px;top:236.5px;width:140px;height:14.5px;background:#343434;"></div>
<div class="a" style="left:860px;top:236.5px;width:140px;height:0.6px;background:#282828;"></div>
<div class="a" style="left:990.4px;top:241.3px;width:5.6px;height:5.6px;background:#4e4e4e;border-radius:1px"></div>
<svg style="left:990.7px;top:241.6px;" width="5" height="5" viewBox="0 0 5 5"><path d="M0.9 2.6L2.1 3.9L4.2 1" stroke="#f0f0f0" stroke-width="1" fill="none"/></svg>
<div class="a" style="left:860px;top:251px;width:140px;height:14.5px;background:#343434;"></div>
<div class="a" style="left:860px;top:251px;width:140px;height:0.6px;background:#282828;"></div>
<div class="a" style="left:990.4px;top:255.8px;width:5.6px;height:5.6px;background:#4e4e4e;border-radius:1px"></div>
<svg style="left:990.7px;top:256.1px;" width="5" height="5" viewBox="0 0 5 5"><path d="M0.9 2.6L2.1 3.9L4.2 1" stroke="#f0f0f0" stroke-width="1" fill="none"/></svg>
<div class="a" style="left:860px;top:265.8px;width:140px;height:14.5px;background:#343434;"></div>
<div class="a" style="left:860px;top:265.8px;width:140px;height:0.6px;background:#282828;"></div>
<div class="a" style="left:990.4px;top:270.6px;width:5.6px;height:5.6px;background:#4e4e4e;border-radius:1px"></div>
<svg style="left:990.7px;top:270.90000000000003px;" width="5" height="5" viewBox="0 0 5 5"><path d="M0.9 2.6L2.1 3.9L4.2 1" stroke="#f0f0f0" stroke-width="1" fill="none"/></svg>
<div class="a" style="left:860px;top:280.3px;width:140px;height:14.7px;background:#5b8bd0;"></div>
<div class="a" style="left:860px;top:280.3px;width:140px;height:0.6px;background:#3a5a8a;"></div>
<div id="t67" class="t" style="left:981.5px;top:284.60px;font-size:7px;color:#e8eef8;font-family:&quot;Liberation Serif&quot;,serif"><i>fx</i></div>
<div class="a" style="left:990.2px;top:284.6px;width:6.2px;height:6.2px;background:#444;border-radius:1px"></div>
<svg style="left:990.7px;top:285.2px;" width="5" height="5" viewBox="0 0 5 5"><path d="M1 2.6L2.2 3.8L4.1 1.2" stroke="#fff" stroke-width="0.9" fill="none"/></svg>
<div class="a" style="left:860px;top:519px;width:140px;height:10px;background:#3a3a3a;"></div>
<div class="a" style="left:860.3px;top:519.6px;width:8.5px;height:8.8px;background:#222;border-radius:1px"></div>
<svg style="left:860.6px;top:520.8px;" width="8" height="7" viewBox="0 0 8 7"><ellipse cx="4" cy="3.5" rx="3.5" ry="3" fill="#ccc"/><path d="M1 3.5H7M1.5 2.2H6.5" stroke="#444" stroke-width="0.6"/></svg>
<svg style="left:904.5px;top:520.5px;" width="7" height="7" viewBox="0 0 7 7"><rect x="0.5" y="0.5" width="6" height="6" fill="#ccc"/><circle cx="3.5" cy="3.5" r="2" fill="#333"/></svg>
<svg style="left:915.5px;top:520.5px;" width="7" height="7" viewBox="0 0 7 7"><circle cx="3.5" cy="3.5" r="3" fill="#ccc"/><path d="M3.5 0.5A3 3 0 0 0 3.5 6.5Z" fill="#333"/></svg>
<div id="t68" class="t" style="left:926.5px;top:521.30px;font-size:7.5px;color:#cccccc;font-family:&quot;Liberation Serif&quot;,serif"><i>fx</i></div>
<svg style="left:970.5px;top:520.5px;" width="6" height="7" viewBox="0 0 6 7"><path d="M0.5 0.5H4L5.5 2V6.5H0.5Z" fill="#ccc"/></svg>
<svg style="left:980.5px;top:520px;" width="7" height="8" viewBox="0 0 7 8"><path d="M0.5 1.5H3.5L5 3V7.5H0.5Z M2 0.5H5L6.5 2V6" fill="#ccc" stroke="#3a3a3a" stroke-width="0.4"/></svg>
<svg style="left:991.5px;top:520px;" width="6" height="8" viewBox="0 0 6 8"><path d="M0.5 1.5H5.5M1 2.2V7.5H5V2.2" stroke="#aaa" stroke-width="0.9" fill="#888"/></svg>
<div class="a" style="left:719px;top:386px;width:140px;height:11px;background:#262626;"></div>
<svg style="left:723px;top:388px;" width="3" height="7" viewBox="0 0 3 7"><path d="M0.5 0V7M2.5 0V7" stroke="#555" stroke-width="0.6"/></svg>
<div class="a" style="left:729px;top:386px;width:28.5px;height:11px;background:#383838;"></div>
<div id="t69" class="t" style="left:731px;top:389.10px;font-size:6.8px;color:#dcdcdc;transform:scaleX(0.8209);transform-origin:0 50%;">Character</div>
<div id="t70" class="t" style="left:760px;top:389.10px;font-size:6.8px;color:#bdbdbd;transform:scaleX(0.7090);transform-origin:0 50%;">Par</div>
<div id="t71" class="t" style="left:773px;top:389.10px;font-size:6.8px;color:#bdbdbd;transform:scaleX(0.7855);transform-origin:0 50%;">32P</div>
<div id="t72" class="t" style="left:787.5px;top:389.10px;font-size:6.8px;color:#bdbdbd;transform:scaleX(0.8521);transform-origin:0 50%;">Isometric</div>
<svg style="left:851px;top:389px;" width="6" height="6" viewBox="0 0 6 6"><rect x="0" y="0.5" width="4.2" height="4" fill="#cfcfcf"/><path d="M4.8 4.5H6" stroke="#cfcfcf" stroke-width="0.7"/></svg>
<div class="a" style="left:719px;top:397px;width:140px;height:132px;background:#3b3b3b;"></div>
<div class="a" style="left:726px;top:401.5px;width:41.5px;height:9.3px;background:#2e2e2e;border-radius:1px"></div>
<div id="t73" class="t" style="left:728.8px;top:404.10px;font-size:6.8px;color:#dcdcdc;transform:scaleX(0.9256);transform-origin:0 50%;">All</div>
<svg style="left:761.8px;top:405.34999999999997px;" width="3.4" height="2" viewBox="0 0 3.4 2"><path d="M0 0H3.4L1.7 2Z" fill="#d8d8d8"/></svg>
<div class="a" style="left:770px;top:401.5px;width:80.5px;height:9.3px;background:#2e2e2e;border-radius:1px"></div>
<div id="t74" class="t" style="left:772.8px;top:404.10px;font-size:6.8px;color:#dcdcdc;transform:scaleX(0.8817);transform-origin:0 50%;">Arial</div>
<svg style="left:844.8px;top:405.34999999999997px;" width="3.4" height="2" viewBox="0 0 3.4 2"><path d="M0 0H3.4L1.7 2Z" fill="#d8d8d8"/></svg>
<div class="a" style="left:726px;top:414.2px;width:41.5px;height:9.3px;background:#2e2e2e;border-radius:1px"></div>
<div id="t75" class="t" style="left:728.8px;top:416.80px;font-size:6.8px;color:#dcdcdc;transform:scaleX(0.8415);transform-origin:0 50%;">37,9 pt</div>
<svg style="left:761.8px;top:418.04999999999995px;" width="3.4" height="2" viewBox="0 0 3.4 2"><path d="M0 0H3.4L1.7 2Z" fill="#d8d8d8"/></svg>
<div class="a" style="left:760.5px;top:414.2px;width:0.6px;height:9.3px;background:#3b3b3b;"></div>
<div class="a" style="left:770px;top:414.2px;width:53.5px;height:9.3px;background:#2e2e2e;border-radius:1px"></div>
<div id="t76" class="t" style="left:772.8px;top:416.80px;font-size:6.8px;color:#dcdcdc;transform:scaleX(0.7349);transform-origin:0 50%;">Regular</div>
<svg style="left:817.8px;top:418.04999999999995px;" width="3.4" height="2" viewBox="0 0 3.4 2"><path d="M0 0H3.4L1.7 2Z" fill="#d8d8d8"/></svg>
<div class="a" style="left:825.5px;top:414.6px;width:12.5px;height:9px;background:#000;border:0.5px solid #555"></div>
<div class="a" style="left:840.5px;top:414.6px;width:11px;height:9px;background:#fff;border:0.5px solid #555"></div>
<svg style="left:840.5px;top:414.6px;" width="11" height="9" viewBox="0 0 11 9"><path d="M1 8.5L10.5 0.5" stroke="#e02828" stroke-width="0.8"/></svg>
<div class="a" style="left:726px;top:427px;width:124.5px;height:9.3px;background:#2e2e2e;border-radius:1px"></div>
<div id="t77" class="t" style="left:728.8px;top:429.60px;font-size:6.8px;color:#dcdcdc;transform:scaleX(0.8314);transform-origin:0 50%;">[No Style]</div>
<svg style="left:844.8px;top:430.84999999999997px;" width="3.4" height="2" viewBox="0 0 3.4 2"><path d="M0 0H3.4L1.7 2Z" fill="#d8d8d8"/></svg>
<div class="a" style="left:726px;top:448px;width:82.5px;height:10.5px;background:#393939;border:0.6px solid #333;border-radius:1.5px"></div>
<div class="a" style="left:732px;top:453px;width:57px;height:0.8px;background:#9a9a9a;"></div>
<svg style="left:755px;top:448px;" width="11" height="10" viewBox="0 0 11 10"><path d="M0.3 10L10.8 0.2" stroke="#c82828" stroke-width="0.9"/></svg>
<div id="t78" class="t" style="left:791px;top:450.50px;font-size:6.8px;color:#e0e0e0;transform:scaleX(0.8923);transform-origin:0 50%;">None</div>
<div class="a" style="left:814px;top:448px;width:12px;height:10px;background:#000;border:0.5px solid #555"></div>
<div class="a" style="left:719px;top:461.8px;width:131px;height:10px;background:#353535;"></div>
<svg style="left:722px;top:465px;" width="4" height="4" viewBox="0 0 4 4"><path d="M0 4H4V0Z" fill="#777"/></svg>
<div id="t79" class="t" style="left:729px;top:464.00px;font-size:6.8px;color:#e0e0e0;transform:scaleX(0.7661);transform-origin:0 50%;">Positioning and Transform</div>
<div class="a" style="left:851.5px;top:443px;width:5.5px;height:86px;background:#3b3b3b;"></div>
<svg style="left:852px;top:441.5px;" width="4.5" height="3" viewBox="0 0 4.5 3"><path d="M0 3H4.5L2.25 0Z" fill="#666"/></svg>
<svg style="left:852px;top:523.8px;" width="4.5" height="3" viewBox="0 0 4.5 3"><path d="M0 0H4.5L2.25 3Z" fill="#666"/></svg>
<div class="a" style="left:852.5px;top:460px;width:3.5px;height:33.6px;background:#5a5a5a;border-radius:2px"></div>
<svg style="left:725.5px;top:476.5px;" width="9" height="9" viewBox="0 0 9 9"><path d="M0.5 1.5L2 6L3.5 1.5M3.5 6L5 1.5L6.5 6M4 4.5H6" stroke="#bbb" stroke-width="0.7" fill="none"/><path d="M1 3.5L7.5 8.5M0.5 8.5H8.5" stroke="#bbb" stroke-width="0.5"/></svg>
<div class="a" style="left:735.2px;top:476px;width:40.6px;height:9.4px;background:#2e2e2e;border-radius:1px"></div>
<div id="t80" class="t" style="left:738.0px;top:478.60px;font-size:6.8px;color:#dcdcdc;transform:scaleX(0.8824);transform-origin:0 50%;">(0 ‰)</div>
<svg style="left:770.1px;top:479.9px;" width="3.4" height="2" viewBox="0 0 3.4 2"><path d="M0 0H3.4L1.7 2Z" fill="#d8d8d8"/></svg>
<div class="a" style="left:768.8px;top:476px;width:0.6px;height:9.4px;background:#3b3b3b;"></div>
<svg style="left:778.3px;top:477.5px;" width="4" height="7" viewBox="0 0 4 7"><path d="M0.3 2.6L2 0.6L3.7 2.6ZM0.3 4.4L2 6.4L3.7 4.4Z" fill="#bbb"/></svg>
<svg style="left:793px;top:477px;" width="8" height="8" viewBox="0 0 8 8"><path d="M2 1.5H7.5M4.8 1.5L3.2 7.5" stroke="#bbb" stroke-width="0.8" fill="none"/><path d="M1.2 1.5V3" stroke="#bbb" stroke-width="0.5"/></svg>
<div class="a" style="left:804.5px;top:476px;width:33.2px;height:9.4px;background:#2e2e2e;border-radius:1px"></div>
<div id="t81" class="t" style="left:807.3px;top:478.60px;font-size:6.8px;color:#dcdcdc;transform:scaleX(0.9534);transform-origin:0 50%;">0 °</div>
<svg style="left:842.3px;top:477.5px;" width="4" height="7" viewBox="0 0 4 7"><path d="M0.3 2.6L2 0.6L3.7 2.6ZM0.3 4.4L2 6.4L3.7 4.4Z" fill="#bbb"/></svg>
<svg style="left:725.5px;top:488.8px;" width="9" height="9" viewBox="0 0 9 9"><path d="M0.5 1.5L2 5.5L3.5 1.5M3.5 5.5L5 1.5L6.5 5.5M4 4.2H6" stroke="#bbb" stroke-width="0.7" fill="none"/><path d="M0.5 7.5H8" stroke="#bbb" stroke-width="0.8"/></svg>
<div class="a" style="left:735.2px;top:488.3px;width:40.6px;height:9.4px;background:#2e2e2e;border-radius:1px"></div>
<div id="t82" class="t" style="left:738.0px;top:490.90px;font-size:6.8px;color:#dcdcdc;transform:scaleX(0.8822);transform-origin:0 50%;">0 ‰</div>
<svg style="left:770.1px;top:492.2px;" width="3.4" height="2" viewBox="0 0 3.4 2"><path d="M0 0H3.4L1.7 2Z" fill="#d8d8d8"/></svg>
<div class="a" style="left:768.8px;top:488.3px;width:0.6px;height:9.4px;background:#3b3b3b;"></div>
<svg style="left:778.3px;top:489.8px;" width="4" height="7" viewBox="0 0 4 7"><path d="M0.3 2.6L2 0.6L3.7 2.6ZM0.3 4.4L2 6.4L3.7 4.4Z" fill="#bbb"/></svg>
<svg style="left:793px;top:489.3px;" width="8" height="8" viewBox="0 0 8 8"><path d="M1.5 1H6.5M4 1V7.5M1.5 7.5H6.5" stroke="#bbb" stroke-width="0.8" fill="none"/></svg>
<div class="a" style="left:804.5px;top:488.3px;width:33.2px;height:9.4px;background:#2e2e2e;border-radius:1px"></div>
<div id="t83" class="t" style="left:807.3px;top:490.90px;font-size:6.8px;color:#dcdcdc;transform:scaleX(0.7780);transform-origin:0 50%;">100 %</div>
<svg style="left:842.3px;top:489.8px;" width="4" height="7" viewBox="0 0 4 7"><path d="M0.3 2.6L2 0.6L3.7 2.6ZM0.3 4.4L2 6.4L3.7 4.4Z" fill="#bbb"/></svg>
<svg style="left:725.5px;top:501.1px;" width="9" height="9" viewBox="0 0 9 9"><path d="M3.5 6L5.5 0.8L7.5 6M4.3 4H6.7" stroke="#bbb" stroke-width="0.7" fill="none"/><path d="M1 5V9H2.5" stroke="#bbb" stroke-width="0.6" fill="none"/></svg>
<div class="a" style="left:735.2px;top:500.6px;width:40.6px;height:9.4px;background:#2e2e2e;border-radius:1px"></div>
<div id="t84" class="t" style="left:738.0px;top:503.20px;font-size:6.8px;color:#dcdcdc;transform:scaleX(0.7934);transform-origin:0 50%;">0 pt</div>
<svg style="left:770.1px;top:504.5px;" width="3.4" height="2" viewBox="0 0 3.4 2"><path d="M0 0H3.4L1.7 2Z" fill="#d8d8d8"/></svg>
<div class="a" style="left:768.8px;top:500.6px;width:0.6px;height:9.4px;background:#3b3b3b;"></div>
<svg style="left:778.3px;top:502.1px;" width="4" height="7" viewBox="0 0 4 7"><path d="M0.3 2.6L2 0.6L3.7 2.6ZM0.3 4.4L2 6.4L3.7 4.4Z" fill="#bbb"/></svg>
<svg style="left:793px;top:501.6px;" width="8" height="8" viewBox="0 0 8 8"><path d="M1 1.5V7.5M3 1.5H8M5.5 1.5V7.5" stroke="#bbb" stroke-width="0.8" fill="none"/></svg>
<div class="a" style="left:804.5px;top:500.6px;width:33.2px;height:9.4px;background:#2e2e2e;border-radius:1px"></div>
<div id="t85" class="t" style="left:807.3px;top:503.20px;font-size:6.8px;color:#dcdcdc;transform:scaleX(0.7780);transform-origin:0 50%;">100 %</div>
<svg style="left:842.3px;top:502.1px;" width="4" height="7" viewBox="0 0 4 7"><path d="M0.3 2.6L2 0.6L3.7 2.6ZM0.3 4.4L2 6.4L3.7 4.4Z" fill="#bbb"/></svg>
<svg style="left:725.5px;top:513.5px;" width="9" height="9" viewBox="0 0 9 9"><path d="M2.5 5L4.5 0.8L6.5 5M3.2 3.5H5.8M1 6.5V8.7H8V6.5M4.5 5.5V8.7" stroke="#bbb" stroke-width="0.7" fill="none"/></svg>
<div class="a" style="left:735.2px;top:513px;width:40.6px;height:9.4px;background:#2e2e2e;border-radius:1px"></div>
<div id="t86" class="t" style="left:738.0px;top:515.60px;font-size:6.8px;color:#dcdcdc;transform:scaleX(0.7901);transform-origin:0 50%;">(39,1 pt)</div>
<svg style="left:770.1px;top:516.9000000000001px;" width="3.4" height="2" viewBox="0 0 3.4 2"><path d="M0 0H3.4L1.7 2Z" fill="#d8d8d8"/></svg>
<div class="a" style="left:768.8px;top:513px;width:0.6px;height:9.4px;background:#3b3b3b;"></div>
<svg style="left:778.3px;top:514.5px;" width="4" height="7" viewBox="0 0 4 7"><path d="M0.3 2.6L2 0.6L3.7 2.6ZM0.3 4.4L2 6.4L3.7 4.4Z" fill="#bbb"/></svg>
<svg style="left:792px;top:514px;" width="8" height="8" viewBox="0 0 8 8"><path d="M0.5 2H3.5M0.5 4.5H3.5M5 1.5L7.5 3.2L5 5M0.5 7H7.5" stroke="#bbb" stroke-width="0.7" fill="none"/></svg>
<div class="a" style="left:801.5px;top:513px;width:40px;height:9.4px;background:#2e2e2e;border-radius:1px"></div>
<div id="t87" class="t" style="left:804.3px;top:515.60px;font-size:6.8px;color:#dcdcdc;transform:scaleX(0.7385);transform-origin:0 50%;">None</div>
<svg style="left:835.8px;top:516.9000000000001px;" width="3.4" height="2" viewBox="0 0 3.4 2"><path d="M0 0H3.4L1.7 2Z" fill="#d8d8d8"/></svg>
<div class="a" style="left:724px;top:526px;width:5px;height:3px;background:#555;"></div>
<div id="t88" class="t" style="left:731px;top:526.80px;font-size:6.8px;color:#dcdcdc;transform:scaleX(0.7248);transform-origin:0 50%;height:3px;overflow:hidden">No break</div>
<div class="a" style="left:611px;top:111.5px;width:308.4px;height:275.2px;background:#3e3e3e;box-shadow:0 0 2px rgba(0,0,0,0.4)"></div>
<div class="a" style="left:611px;top:111.5px;width:308.4px;height:275.2px;border:1px solid #2c2c2c;border-right-color:#3a3a3a;border-bottom-color:#3a3a3a"></div>
<div class="a" style="left:612px;top:112.5px;width:306px;height:10.5px;background:#3a3a3a;"></div>
<div id="t89" class="t" style="left:746.6px;top:115.80px;font-size:6.8px;color:#e4e4e4;transform:scaleX(0.8800);transform-origin:0 50%;">Layer Effects</div>
<svg style="left:911.5px;top:115.8px;" width="4.6" height="4.6" viewBox="0 0 4.6 4.6"><path d="M0 0L4.6 4.6M4.6 0L0 4.6" stroke="#e8e8e8" stroke-width="1"/></svg>
<div class="a" style="left:612.5px;top:123.3px;width:72.3px;height:239.5px;background:#313131;"></div>
<div class="a" style="left:684.5px;top:123.3px;width:0.8px;height:239.5px;background:#2b2b2b;"></div>
<div class="a" style="left:612.5px;top:123.6px;width:72.3px;height:13.6px;background:#353535;"></div>
<div class="a" style="left:616px;top:128.0px;width:4.8px;height:4.8px;background:#525252;border-radius:0.5px"></div>
<div id="t90" class="t" style="left:623.3px;top:128.20px;font-size:6.6px;color:#dcdcdc;transform:scaleX(0.8329);transform-origin:0 50%;">Gaussian Blur</div>
<div class="a" style="left:612.5px;top:137.2px;width:72.3px;height:13.6px;background:#5a88cf;"></div>
<div class="a" style="left:615.5px;top:141.39999999999998px;width:5.3px;height:5.3px;background:#3b5f94;border-radius:1px"></div>
<svg style="left:616px;top:141.79999999999998px;" width="4.5" height="4.5" viewBox="0 0 4.5 4.5"><path d="M0.7 2.3L1.9 3.6L3.9 0.8" stroke="#fff" stroke-width="0.9" fill="none"/></svg>
<div id="t91" class="t" style="left:623.3px;top:141.80px;font-size:6.6px;color:#f4f6fa;transform:scaleX(0.7828);transform-origin:0 50%;">Outer Shadow</div>
<div class="a" style="left:612.5px;top:150.79999999999998px;width:72.3px;height:13.6px;background:#353535;"></div>
<div class="a" style="left:616px;top:155.2px;width:4.8px;height:4.8px;background:#525252;border-radius:0.5px"></div>
<div id="t92" class="t" style="left:623.3px;top:155.40px;font-size:6.6px;color:#dcdcdc;transform:scaleX(0.8353);transform-origin:0 50%;">Inner Shadow</div>
<div class="a" style="left:612.5px;top:164.39999999999998px;width:72.3px;height:13.6px;background:#313131;"></div>
<div class="a" style="left:616px;top:168.79999999999998px;width:4.8px;height:4.8px;background:#525252;border-radius:0.5px"></div>
<div id="t93" class="t" style="left:623.3px;top:169.00px;font-size:6.6px;color:#dcdcdc;transform:scaleX(0.8693);transform-origin:0 50%;">Outer Glow</div>
<div class="a" style="left:612.5px;top:178.0px;width:72.3px;height:13.6px;background:#353535;"></div>
<div class="a" style="left:616px;top:182.4px;width:4.8px;height:4.8px;background:#525252;border-radius:0.5px"></div>
<div id="t94" class="t" style="left:623.3px;top:182.60px;font-size:6.6px;color:#dcdcdc;transform:scaleX(0.8780);transform-origin:0 50%;">Inner Glow</div>
<div class="a" style="left:612.5px;top:191.6px;width:72.3px;height:13.6px;background:#313131;"></div>
<div class="a" style="left:616px;top:196.0px;width:4.8px;height:4.8px;background:#525252;border-radius:0.5px"></div>
<div id="t95" class="t" style="left:623.3px;top:196.20px;font-size:6.6px;color:#dcdcdc;transform:scaleX(0.9088);transform-origin:0 50%;">Outline</div>
<div class="a" style="left:612.5px;top:205.2px;width:72.3px;height:13.6px;background:#353535;"></div>
<div class="a" style="left:616px;top:209.6px;width:4.8px;height:4.8px;background:#525252;border-radius:0.5px"></div>
<div id="t96" class="t" style="left:623.3px;top:209.80px;font-size:6.6px;color:#dcdcdc;transform:scaleX(0.9481);transform-origin:0 50%;">3D</div>
<div class="a" style="left:612.5px;top:218.8px;width:72.3px;height:13.6px;background:#313131;"></div>
<div class="a" style="left:616px;top:223.20000000000002px;width:4.8px;height:4.8px;background:#525252;border-radius:0.5px"></div>
<div id="t97" class="t" style="left:623.3px;top:223.40px;font-size:6.6px;color:#dcdcdc;transform:scaleX(0.6767);transform-origin:0 50%;">Bevel / Emboss</div>
<div class="a" style="left:612.5px;top:232.39999999999998px;width:72.3px;height:13.6px;background:#353535;"></div>
<div class="a" style="left:616px;top:236.79999999999998px;width:4.8px;height:4.8px;background:#525252;border-radius:0.5px"></div>
<div id="t98" class="t" style="left:623.3px;top:237.00px;font-size:6.6px;color:#dcdcdc;transform:scaleX(0.7957);transform-origin:0 50%;">Colour Overlay</div>
<div class="a" style="left:612.5px;top:246.0px;width:72.3px;height:13.6px;background:#313131;"></div>
<div class="a" style="left:616px;top:250.4px;width:4.8px;height:4.8px;background:#525252;border-radius:0.5px"></div>
<div id="t99" class="t" style="left:623.3px;top:250.60px;font-size:6.6px;color:#dcdcdc;transform:scaleX(0.7724);transform-origin:0 50%;">Gradient Overlay</div>
<div id="t100" class="t" style="left:693.3px;top:134.70px;font-size:6.6px;color:#dcdcdc;transform:scaleX(0.7831);transform-origin:0 50%;">Blend mode:</div>
<div id="t101" class="t" style="left:693.3px;top:146.50px;font-size:6.6px;color:#dcdcdc;transform:scaleX(0.8475);transform-origin:0 50%;">Opacity:</div>
<div id="t102" class="t" style="left:693.3px;top:159.10px;font-size:6.6px;color:#dcdcdc;transform:scaleX(0.7827);transform-origin:0 50%;">Radius:</div>
<div id="t103" class="t" style="left:693.3px;top:171.70px;font-size:6.6px;color:#dcdcdc;transform:scaleX(0.8544);transform-origin:0 50%;">Offset:</div>
<div id="t104" class="t" style="left:693.3px;top:184.30px;font-size:6.6px;color:#dcdcdc;transform:scaleX(0.8526);transform-origin:0 50%;">Intensity:</div>
<div id="t105" class="t" style="left:693.3px;top:196.70px;font-size:6.6px;color:#dcdcdc;transform:scaleX(0.8229);transform-origin:0 50%;">Colour:</div>
<div id="t106" class="t" style="left:693.3px;top:219.50px;font-size:6.6px;color:#dcdcdc;transform:scaleX(0.8020);transform-origin:0 50%;">Angle:</div>
<div class="a" style="left:745.4px;top:131.7px;width:62.6px;height:10px;background:#2f2f2f;border-radius:1px"></div>
<div id="t107" class="t" style="left:748.3px;top:134.40px;font-size:6.8px;color:#e0e0e0;transform:scaleX(0.8678);transform-origin:0 50%;">Multiply</div>
<svg style="left:801.5px;top:136px;" width="3.4" height="2" viewBox="0 0 3.4 2"><path d="M0 0H3.4L1.7 2Z" fill="#d8d8d8"/></svg>
<div class="a" style="left:745px;top:147.3px;width:126px;height:3.6px;border-radius:2px;background:linear-gradient(90deg,rgba(255,255,255,1),rgba(255,255,255,0.85) 30%,rgba(255,255,255,0) 100%),repeating-linear-gradient(90deg,#555 0 1.5px,#333 1.5px 3px);"></div>
<svg style="left:806px;top:146px;" width="6" height="6" viewBox="0 0 6 6"><circle cx="3" cy="3" r="2.6" fill="#cfcfcf" stroke="#555" stroke-width="0.6"/></svg>
<div class="a" style="left:745px;top:161.0px;width:126px;height:1.6px;background:#2c2c2c;"></div>
<div class="a" style="left:745px;top:161.0px;width:69px;height:1.6px;background:#4a84d0;"></div>
<svg style="left:811px;top:158.8px;" width="6" height="6" viewBox="0 0 6 6"><circle cx="3" cy="3" r="2.6" fill="#cfcfcf" stroke="#777" stroke-width="0.4"/></svg>
<div class="a" style="left:745px;top:173.6px;width:126px;height:1.6px;background:#2c2c2c;"></div>
<div class="a" style="left:745px;top:173.6px;width:89.29999999999995px;height:1.6px;background:#4a84d0;"></div>
<svg style="left:831.3px;top:171.4px;" width="6" height="6" viewBox="0 0 6 6"><circle cx="3" cy="3" r="2.6" fill="#cfcfcf" stroke="#777" stroke-width="0.4"/></svg>
<div class="a" style="left:745px;top:186.1px;width:126px;height:1.6px;background:#2c2c2c;"></div>
<svg style="left:745.5px;top:183.9px;" width="6" height="6" viewBox="0 0 6 6"><circle cx="3" cy="3" r="2.6" fill="#cfcfcf" stroke="#777" stroke-width="0.4"/></svg>
<div class="a" style="left:873.8px;top:143.8px;width:39px;height:10px;background:#2f2f2f;border-radius:1px"></div>
<div id="t108" class="t" style="left:876.8px;top:146.50px;font-size:6.8px;color:#e0e0e0;transform:scaleX(0.6774);transform-origin:0 50%;">50 %</div>
<div class="a" style="left:873.8px;top:156.4px;width:39px;height:10px;background:#2f2f2f;border-radius:1px"></div>
<div id="t109" class="t" style="left:876.8px;top:159.10px;font-size:6.8px;color:#e0e0e0;transform:scaleX(0.7812);transform-origin:0 50%;">20 px</div>
<div class="a" style="left:873.8px;top:169px;width:39px;height:10px;background:#2f2f2f;border-radius:1px"></div>
<div id="t110" class="t" style="left:876.8px;top:171.70px;font-size:6.8px;color:#e0e0e0;transform:scaleX(0.7812);transform-origin:0 50%;">35 px</div>
<div class="a" style="left:873.8px;top:181.8px;width:39px;height:10px;background:#2f2f2f;border-radius:1px"></div>
<div id="t111" class="t" style="left:876.8px;top:184.50px;font-size:6.8px;color:#e0e0e0;transform:scaleX(0.6827);transform-origin:0 50%;">0 %</div>
<div class="a" style="left:745.4px;top:194.3px;width:31px;height:9.3px;background:#000;border:0.5px solid #2a2a2a"></div>
<div class="a" style="left:744.7px;top:205.3px;width:31px;height:31px;border-radius:50%;background:radial-gradient(circle at 50% 40%,#3a3a3a,#2c2c2c 70%,#262626);box-shadow:0 0 1px #222"></div>
<div id="t112" class="t" style="left:753.8px;top:217.10px;font-size:6.2px;color:#d8d8d8;transform:scaleX(0.8946);transform-origin:0 50%;">315 °</div>
<svg style="left:765px;top:226px;" width="9" height="9" viewBox="0 0 9 9"><path d="M1 1L8 8" stroke="#4a84d0" stroke-width="0.9"/></svg>
<div class="a" style="left:746.5px;top:242px;width:4.8px;height:4.8px;background:#dcdcdc;border-radius:0.5px"></div>
<svg style="left:746.8px;top:242.3px;" width="4.2" height="4.2" viewBox="0 0 4.2 4.2"><path d="M0.6 2.1L1.7 3.3L3.6 0.7" stroke="#333" stroke-width="0.8" fill="none"/></svg>
<div id="t113" class="t" style="left:753.2px;top:242.00px;font-size:6.6px;color:#e0e0e0;transform:scaleX(0.8742);transform-origin:0 50%;">Fill knocks out shadow</div>
<div class="a" style="left:619.5px;top:372.3px;width:4.6px;height:4.6px;background:#525252;border-radius:0.5px"></div>
<div id="t114" class="t" style="left:626.6px;top:372.10px;font-size:6.6px;color:#dcdcdc;transform:scaleX(0.8596);transform-origin:0 50%;">Scale with Object</div>
<div id="t115" class="t" style="left:807.4px;top:372.10px;font-size:6.6px;color:#dcdcdc;transform:scaleX(0.8533);transform-origin:0 50%;">Fill Opacity:</div>
<div class="a" style="left:838.4px;top:369.8px;width:31px;height:10px;background:#2f2f2f;border-radius:1px"></div>
<div id="t116" class="t" style="left:841.8px;top:372.30px;font-size:6.8px;color:#e0e0e0;transform:scaleX(0.7520);transform-origin:0 50%;">100 %</div>
<svg style="left:863.5px;top:374px;" width="3.4" height="2" viewBox="0 0 3.4 2"><path d="M0 0H3.4L1.7 2Z" fill="#d8d8d8"/></svg>
<div class="a" style="left:874.6px;top:369.4px;width:38px;height:10.2px;background:#383838;border:0.6px solid #2e2e2e;border-radius:1px"></div>
<div id="t117" class="t" style="left:885.5px;top:372.00px;font-size:6.8px;color:#e0e0e0;transform:scaleX(0.9200);transform-origin:0 50%;">Close</div>
</body></html>
